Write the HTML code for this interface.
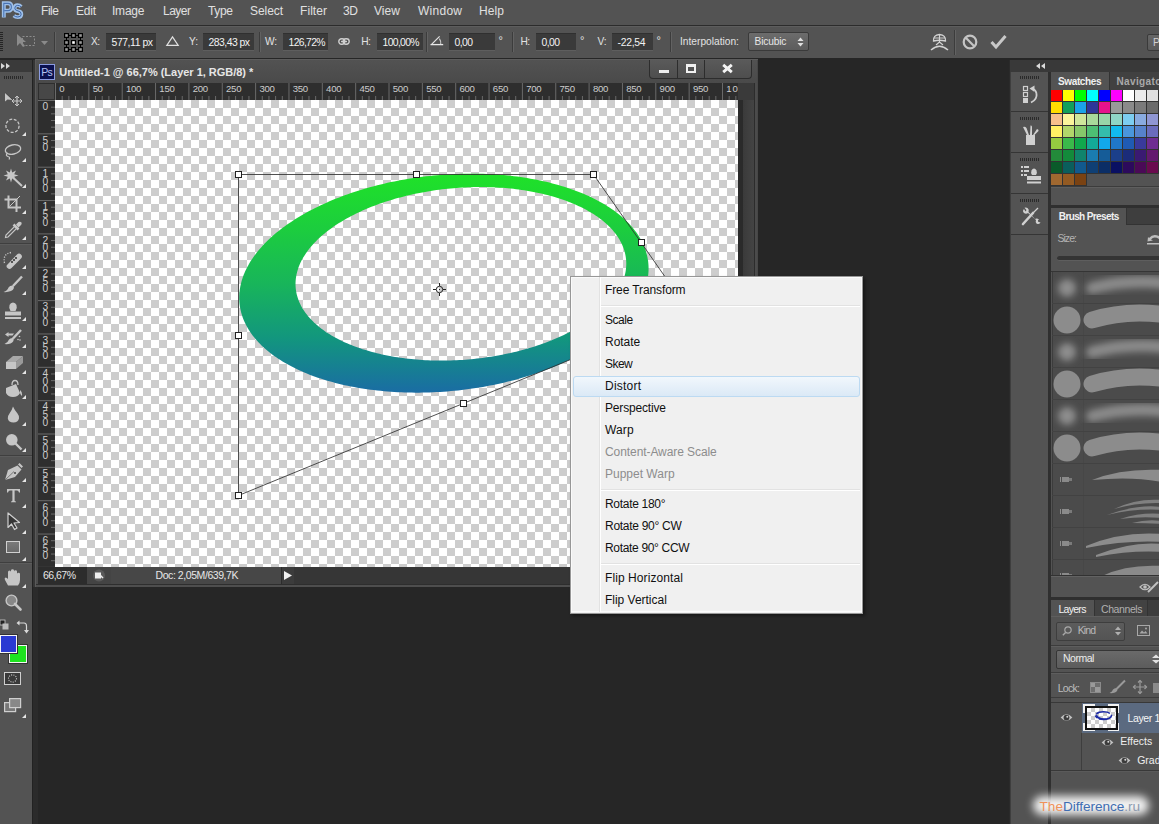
<!DOCTYPE html>
<html><head><meta charset="utf-8">
<style>
*{margin:0;padding:0;box-sizing:border-box}
html,body{width:1159px;height:824px;overflow:hidden;background:#262626;font-family:"Liberation Sans",sans-serif;position:relative}
.a{position:absolute}
svg.a{overflow:visible}
.t{position:absolute;white-space:nowrap}
.chk{background-color:#fff;background-image:linear-gradient(45deg,#cdcdcd 25%,transparent 25%,transparent 75%,#cdcdcd 75%),linear-gradient(45deg,#cdcdcd 25%,transparent 25%,transparent 75%,#cdcdcd 75%);background-size:16px 16px;background-position:0 0,8px 8px}
</style></head><body>
<div class="a" style="left:0px;top:0px;width:1159px;height:25px;background:#535353;"></div>
<div class="a" style="left:0px;top:25px;width:1159px;height:1px;background:#2c2c2c;"></div>
<svg class="a" style="left:0px;top:0px;" width="24" height="20" viewBox="0 0 24 20"><path d="M3.8 17.5 V3.2 H8 Q11.6 3.2 11.6 7 Q11.6 10.8 8 10.8 H4.5" fill="none" stroke="#9fc0e8" stroke-width="3.9"/><path d="M3.8 17 V3.4 H8 Q11.4 3.4 11.4 7 Q11.4 10.6 8 10.6 H4.5" fill="none" stroke="#4a74b4" stroke-width="1.1"/><path d="M21.2 6.8 Q19.8 5.2 17.6 5.2 Q14.6 5.2 14.6 8.2 Q14.6 10.6 18 11.1 Q21.4 11.6 21.4 14.2 Q21.4 17.2 17.8 17.2 Q15.4 17.2 13.8 15.6" fill="none" stroke="#9fc0e8" stroke-width="3.7"/><path d="M21 6.8 Q19.8 5.4 17.6 5.4 Q14.8 5.4 14.8 8.2 Q14.8 10.4 18 10.9 Q21.2 11.4 21.2 14.2 Q21.2 17 17.8 17 Q15.5 17 14 15.6" fill="none" stroke="#3c66a8" stroke-width="1"/></svg>
<div class="t" style="left:41.00px;top:4.96px;font-size:12.00px;line-height:12.00px;color:#e0e0e0;letter-spacing:-0.446px;">File</div>
<div class="t" style="left:76.00px;top:4.96px;font-size:12.00px;line-height:12.00px;color:#e0e0e0;letter-spacing:-0.226px;">Edit</div>
<div class="t" style="left:112.00px;top:4.96px;font-size:12.00px;line-height:12.00px;color:#e0e0e0;letter-spacing:-0.213px;">Image</div>
<div class="t" style="left:163.00px;top:4.96px;font-size:12.00px;line-height:12.00px;color:#e0e0e0;letter-spacing:-0.505px;">Layer</div>
<div class="t" style="left:208.00px;top:4.96px;font-size:12.00px;line-height:12.00px;color:#e0e0e0;letter-spacing:-0.339px;">Type</div>
<div class="t" style="left:250.00px;top:4.96px;font-size:12.00px;line-height:12.00px;color:#e0e0e0;letter-spacing:-0.070px;">Select</div>
<div class="t" style="left:300.00px;top:4.96px;font-size:12.00px;line-height:12.00px;color:#e0e0e0;letter-spacing:0.067px;">Filter</div>
<div class="t" style="left:343.00px;top:4.96px;font-size:12.00px;line-height:12.00px;color:#e0e0e0;letter-spacing:-0.340px;">3D</div>
<div class="t" style="left:374.00px;top:4.96px;font-size:12.00px;line-height:12.00px;color:#e0e0e0;letter-spacing:0.069px;">View</div>
<div class="t" style="left:418.00px;top:4.96px;font-size:12.00px;line-height:12.00px;color:#e0e0e0;letter-spacing:0.264px;">Window</div>
<div class="t" style="left:479.00px;top:4.96px;font-size:12.00px;line-height:12.00px;color:#e0e0e0;letter-spacing:0.106px;">Help</div>
<div class="a" style="left:0px;top:26px;width:1159px;height:32px;background:#535353;border-top:1px solid #5d5d5d"></div>
<svg class="a" style="left:0px;top:32px;" width="8" height="20" viewBox="0 0 8 20"><rect x="0" y="0" width="3" height="1" fill="#252525"/><rect x="0" y="2" width="3" height="1" fill="#252525"/><rect x="0" y="4" width="3" height="1" fill="#252525"/><rect x="0" y="6" width="3" height="1" fill="#252525"/><rect x="0" y="8" width="3" height="1" fill="#252525"/><rect x="0" y="10" width="3" height="1" fill="#252525"/><rect x="0" y="12" width="3" height="1" fill="#252525"/><rect x="0" y="14" width="3" height="1" fill="#252525"/><rect x="0" y="16" width="3" height="1" fill="#252525"/><rect x="0" y="18" width="3" height="1" fill="#252525"/></svg>
<svg class="a" style="left:16px;top:34px;" width="20" height="14" viewBox="0 0 20 14"><path d="M1 0 L1 12 L4 9 L7 13 L9 12 L6 8 L10 8 Z" fill="#8c8c8c"/><rect x="6.5" y="2.5" width="12" height="9" fill="none" stroke="#8c8c8c" stroke-dasharray="2 1.5"/></svg>
<svg class="a" style="left:41px;top:41px;" width="7" height="4" viewBox="0 0 7 4"><path d="M0 0 L7 0 L3.5 4 Z" fill="#8a8a8a"/></svg>
<div class="a" style="left:54px;top:32px;width:1px;height:20px;background:#3c3c3c;"></div>
<div class="a" style="left:55px;top:32px;width:1px;height:20px;background:#626262;"></div>
<svg class="a" style="left:64px;top:33px;" width="19" height="19" viewBox="0 0 19 19"><rect x="0.6" y="0.6" width="3.8" height="3.8" fill="#9a9a9a" stroke="#000" stroke-width="1.2"/><rect x="0.6" y="7.6" width="3.8" height="3.8" fill="#9a9a9a" stroke="#000" stroke-width="1.2"/><rect x="0.6" y="14.6" width="3.8" height="3.8" fill="#9a9a9a" stroke="#000" stroke-width="1.2"/><rect x="7.6" y="0.6" width="3.8" height="3.8" fill="#9a9a9a" stroke="#000" stroke-width="1.2"/><rect x="7.6" y="7.6" width="3.8" height="3.8" fill="#ffffff" stroke="#000" stroke-width="1.2"/><rect x="7.6" y="14.6" width="3.8" height="3.8" fill="#9a9a9a" stroke="#000" stroke-width="1.2"/><rect x="14.6" y="0.6" width="3.8" height="3.8" fill="#9a9a9a" stroke="#000" stroke-width="1.2"/><rect x="14.6" y="7.6" width="3.8" height="3.8" fill="#9a9a9a" stroke="#000" stroke-width="1.2"/><rect x="14.6" y="14.6" width="3.8" height="3.8" fill="#9a9a9a" stroke="#000" stroke-width="1.2"/><path d="M5 2.5 H7 M12 2.5 H14 M5 16.5 H7 M12 16.5 H14 M2.5 5 V7 M2.5 12 V14 M16.5 5 V7 M16.5 12 V14" stroke="#000" stroke-width="1"/></svg>
<div class="t" style="left:91.00px;top:37.33px;font-size:10.20px;line-height:10.20px;color:#e2e2e2;letter-spacing:-0.637px;">X:</div>
<div class="a" style="left:106px;top:32.5px;width:49.5px;height:18.5px;background:#3a3a3a;border-top:1px solid #303030;border-bottom:1px solid #5e5e5e"></div>
<div class="t" style="left:111.60px;top:37.53px;font-size:10.40px;line-height:10.40px;color:#f2f2f2;letter-spacing:-0.439px;">577,11 px</div>
<svg class="a" style="left:166px;top:36px;" width="13" height="10" viewBox="0 0 13 10"><path d="M6.5 0.8 L12.2 9.4 L0.8 9.4 Z" fill="none" stroke="#e0e0e0" stroke-width="1.2"/></svg>
<div class="t" style="left:189.00px;top:37.33px;font-size:10.20px;line-height:10.20px;color:#e2e2e2;letter-spacing:-0.075px;">Y:</div>
<div class="a" style="left:203px;top:32.5px;width:50.5px;height:18.5px;background:#3a3a3a;border-top:1px solid #303030;border-bottom:1px solid #5e5e5e"></div>
<div class="t" style="left:208.60px;top:37.53px;font-size:10.40px;line-height:10.40px;color:#f2f2f2;letter-spacing:-0.535px;">283,43 px</div>
<div class="a" style="left:259px;top:32px;width:1px;height:20px;background:#3c3c3c;"></div>
<div class="a" style="left:260px;top:32px;width:1px;height:20px;background:#626262;"></div>
<div class="t" style="left:265.00px;top:37.33px;font-size:10.20px;line-height:10.20px;color:#e2e2e2;letter-spacing:-0.277px;">W:</div>
<div class="a" style="left:283px;top:32.5px;width:45px;height:18.5px;background:#3a3a3a;border-top:1px solid #303030;border-bottom:1px solid #5e5e5e"></div>
<div class="t" style="left:288.60px;top:37.53px;font-size:10.40px;line-height:10.40px;color:#f2f2f2;letter-spacing:-0.676px;">126,72%</div>
<svg class="a" style="left:338px;top:38px;" width="12" height="7" viewBox="0 0 12 7"><rect x="0.8" y="0.8" width="6" height="5.4" rx="2.7" fill="none" stroke="#cfcfcf" stroke-width="1.4"/><rect x="5.2" y="0.8" width="6" height="5.4" rx="2.7" fill="none" stroke="#cfcfcf" stroke-width="1.4"/><path d="M3 3.5 H9" stroke="#cfcfcf" stroke-width="1.4"/></svg>
<div class="t" style="left:361.30px;top:37.33px;font-size:10.20px;line-height:10.20px;color:#e2e2e2;letter-spacing:-0.600px;">H:</div>
<div class="a" style="left:377px;top:32.5px;width:45.5px;height:18.5px;background:#3a3a3a;border-top:1px solid #303030;border-bottom:1px solid #5e5e5e"></div>
<div class="t" style="left:382.60px;top:37.53px;font-size:10.40px;line-height:10.40px;color:#f2f2f2;letter-spacing:-0.676px;">100,00%</div>
<div class="a" style="left:426px;top:32px;width:1px;height:20px;background:#3c3c3c;"></div>
<div class="a" style="left:427px;top:32px;width:1px;height:20px;background:#626262;"></div>
<svg class="a" style="left:430px;top:35px;" width="14" height="11" viewBox="0 0 14 11"><path d="M0.5 9.6 H13.2" stroke="#e8e8e8" stroke-width="1.3"/><path d="M1.8 9.2 L9.6 1.4" stroke="#e4e4e4" stroke-width="1.2"/><path d="M9.4 3.6 Q11.2 6.2 10.7 9.2" fill="none" stroke="#cfcfcf" stroke-width="1.1"/></svg>
<div class="a" style="left:449px;top:32.5px;width:45.5px;height:18.5px;background:#3a3a3a;border-top:1px solid #303030;border-bottom:1px solid #5e5e5e"></div>
<div class="t" style="left:454.60px;top:37.53px;font-size:10.40px;line-height:10.40px;color:#f2f2f2;letter-spacing:-0.581px;">0,00</div>
<div class="t" style="left:498.50px;top:35.23px;font-size:11.00px;line-height:11.00px;color:#e2e2e2;">°</div>
<div class="a" style="left:512px;top:32px;width:1px;height:20px;background:#3c3c3c;"></div>
<div class="a" style="left:513px;top:32px;width:1px;height:20px;background:#626262;"></div>
<div class="t" style="left:520.50px;top:37.33px;font-size:10.20px;line-height:10.20px;color:#e2e2e2;letter-spacing:-0.600px;">H:</div>
<div class="a" style="left:536px;top:32.5px;width:40px;height:18.5px;background:#3a3a3a;border-top:1px solid #303030;border-bottom:1px solid #5e5e5e"></div>
<div class="t" style="left:541.60px;top:37.53px;font-size:10.40px;line-height:10.40px;color:#f2f2f2;letter-spacing:-0.581px;">0,00</div>
<div class="t" style="left:580.00px;top:35.23px;font-size:11.00px;line-height:11.00px;color:#e2e2e2;">°</div>
<div class="t" style="left:597.50px;top:37.33px;font-size:10.20px;line-height:10.20px;color:#e2e2e2;letter-spacing:-0.259px;">V:</div>
<div class="a" style="left:612px;top:32.5px;width:40.5px;height:18.5px;background:#3a3a3a;border-top:1px solid #303030;border-bottom:1px solid #5e5e5e"></div>
<div class="t" style="left:617.60px;top:37.53px;font-size:10.40px;line-height:10.40px;color:#f2f2f2;letter-spacing:-0.298px;">-22,54</div>
<div class="t" style="left:656.50px;top:35.23px;font-size:11.00px;line-height:11.00px;color:#e2e2e2;">°</div>
<div class="a" style="left:670px;top:32px;width:1px;height:20px;background:#3c3c3c;"></div>
<div class="a" style="left:671px;top:32px;width:1px;height:20px;background:#626262;"></div>
<div class="t" style="left:680.00px;top:37.33px;font-size:10.20px;line-height:10.20px;color:#e2e2e2;letter-spacing:0.002px;">Interpolation:</div>
<div class="a" style="left:747.5px;top:31.5px;width:61px;height:19px;background:linear-gradient(#6c6c6c,#5c5c5c);border:1px solid #3a3a3a;border-radius:2px"></div>
<div class="t" style="left:754.50px;top:37.33px;font-size:10.20px;line-height:10.20px;color:#e6e6e6;letter-spacing:-0.147px;">Bicubic</div>
<svg class="a" style="left:797px;top:37px;" width="7" height="10" viewBox="0 0 7 10"><path d="M0.5 4 L3.5 0.5 L6.5 4 Z M0.5 6 L3.5 9.5 L6.5 6 Z" fill="#e0e0e0"/></svg>
<svg class="a" style="left:930px;top:33px;" width="19" height="18" viewBox="0 0 19 18"><path d="M3.5 8 Q3 2 9.5 1.5 Q16 2 15.5 8 Q9.5 6.5 3.5 8 Z" fill="none" stroke="#d2d2d2" stroke-width="1.3"/><path d="M9.5 1.5 V9 M4 5 H15" stroke="#d2d2d2" stroke-width="1.1"/><path d="M9.5 9 L6 12 M9.5 9 L13 12" stroke="#d2d2d2" stroke-width="1.1"/><path d="M1 17 Q9.5 9.5 18 17" fill="none" stroke="#d2d2d2" stroke-width="1.6"/></svg>
<div class="a" style="left:954px;top:30px;width:1px;height:25px;background:#3c3c3c;"></div>
<div class="a" style="left:955px;top:30px;width:1px;height:25px;background:#626262;"></div>
<svg class="a" style="left:962px;top:34px;" width="16" height="16" viewBox="0 0 16 16"><circle cx="8" cy="8" r="6.3" fill="none" stroke="#c4c4c4" stroke-width="2.2"/><path d="M3.8 3.8 L12.2 12.2" stroke="#c4c4c4" stroke-width="2.2"/></svg>
<svg class="a" style="left:990px;top:34px;" width="17" height="15" viewBox="0 0 17 15"><path d="M1.5 8 L6 13 L15.5 2" fill="none" stroke="#c8c8c8" stroke-width="3"/></svg>
<div class="a" style="left:1147px;top:34px;width:14px;height:17px;background:linear-gradient(#666,#5a5a5a);border:1px solid #3a3a3a;border-radius:2px"></div>
<div class="t" style="left:1153.00px;top:38.43px;font-size:10.20px;line-height:10.20px;color:#d0d0d0;">P</div>
<div class="a" style="left:0px;top:60px;width:32px;height:764px;background:#535353;"></div>
<div class="a" style="left:0px;top:60px;width:32px;height:12px;background:#3a3a3a;"></div>
<div class="a" style="left:32px;top:60px;width:1px;height:764px;background:#222222;"></div>
<div class="a" style="left:33px;top:60px;width:2px;height:527px;background:#363636;"></div>
<div class="a" style="left:33px;top:587px;width:5px;height:237px;background:#2b2b2b;"></div>
<svg class="a" style="left:1px;top:63px;" width="10" height="6" viewBox="0 0 10 6"><path d="M0 0 L4 3 L0 6 Z M5 0 L9 3 L5 6 Z" fill="#d8d8d8"/></svg>
<svg class="a" style="left:4px;top:76px;" width="20" height="3" viewBox="0 0 20 3"><rect x="0" y="0" width="1" height="3" fill="#2a2a2a"/><rect x="2" y="0" width="1" height="3" fill="#2a2a2a"/><rect x="4" y="0" width="1" height="3" fill="#2a2a2a"/><rect x="6" y="0" width="1" height="3" fill="#2a2a2a"/><rect x="8" y="0" width="1" height="3" fill="#2a2a2a"/><rect x="10" y="0" width="1" height="3" fill="#2a2a2a"/><rect x="12" y="0" width="1" height="3" fill="#2a2a2a"/><rect x="14" y="0" width="1" height="3" fill="#2a2a2a"/><rect x="16" y="0" width="1" height="3" fill="#2a2a2a"/><rect x="18" y="0" width="1" height="3" fill="#2a2a2a"/></svg>
<svg class="a" style="left:4px;top:92px;" width="20" height="16" viewBox="0 0 20 16"><path d="M1 0.5 L1 9.5 L3.5 7.5 L9 8 Z" fill="#c6c6c6"/><path d="M1 0.5 L9 8" stroke="#333" stroke-width="0.8"/><path d="M13 4 V14 M8 9 H18" stroke="#c6c6c6" stroke-width="1.2"/><path d="M11 6 L13 4 L15 6 M11 12 L13 14 L15 12 M10 7 L8 9 L10 11 M16 7 L18 9 L16 11" fill="none" stroke="#c6c6c6" stroke-width="1"/></svg>
<svg class="a" style="left:4px;top:118px;" width="18" height="16" viewBox="0 0 18 16"><circle cx="8.5" cy="7.8" r="6.6" fill="none" stroke="#c6c6c6" stroke-width="1.3" stroke-dasharray="3 1.6"/></svg>
<svg class="a" style="left:22px;top:132px;" width="4" height="4" viewBox="0 0 4 4"><path d="M4 0 L4 4 L0 4 Z" fill="#e6e6e6"/></svg>
<svg class="a" style="left:4px;top:143px;" width="19" height="17" viewBox="0 0 19 17"><ellipse cx="9" cy="6.5" rx="7.8" ry="4.6" fill="none" stroke="#c6c6c6" stroke-width="1.3" transform="rotate(-12 9 6.5)"/><path d="M3.5 10 Q1 12.5 4 13.5 Q6.5 14 5 16.5" fill="none" stroke="#c6c6c6" stroke-width="1.2"/></svg>
<svg class="a" style="left:22px;top:158px;" width="4" height="4" viewBox="0 0 4 4"><path d="M4 0 L4 4 L0 4 Z" fill="#e6e6e6"/></svg>
<svg class="a" style="left:3px;top:168px;" width="22" height="20" viewBox="0 0 22 20"><path d="M8 0.5 L9.2 4.5 L13 2.5 L11.2 6.3 L15.5 7.5 L11.2 8.8 L13 12.5 L9.2 10.5 L8 14.5 L6.8 10.5 L3 12.5 L4.8 8.8 L0.5 7.5 L4.8 6.3 L3 2.5 L6.8 4.5 Z" fill="#c6c6c6"/><path d="M10.5 10 L19 18" stroke="#c6c6c6" stroke-width="2"/></svg>
<svg class="a" style="left:22px;top:184px;" width="4" height="4" viewBox="0 0 4 4"><path d="M4 0 L4 4 L0 4 Z" fill="#e6e6e6"/></svg>
<svg class="a" style="left:4px;top:195px;" width="18" height="18" viewBox="0 0 18 18"><path d="M4.5 0.5 V12.5 H17 M0.5 4.5 H12.5 V17" fill="none" stroke="#c6c6c6" stroke-width="2"/><path d="M5.5 11.5 L16 1" stroke="#c6c6c6" stroke-width="1"/></svg>
<svg class="a" style="left:22px;top:210px;" width="4" height="4" viewBox="0 0 4 4"><path d="M4 0 L4 4 L0 4 Z" fill="#e6e6e6"/></svg>
<svg class="a" style="left:4px;top:221px;" width="19" height="18" viewBox="0 0 19 18"><path d="M1.5 16.5 L2 14 L11 5 L13 7 L4 16 Z" fill="none" stroke="#c6c6c6" stroke-width="1.2"/><path d="M9.5 3.5 L14.5 8.5" stroke="#c6c6c6" stroke-width="2.5"/><path d="M12 3.5 L14.5 1 Q16.5 0.5 17.5 1.5 Q18 3 17 4 L14.5 6.5 Z" fill="#c6c6c6"/></svg>
<svg class="a" style="left:22px;top:236px;" width="4" height="4" viewBox="0 0 4 4"><path d="M4 0 L4 4 L0 4 Z" fill="#e6e6e6"/></svg>
<div class="a" style="left:0px;top:243px;width:32px;height:1px;background:#3f3f3f;"></div>
<div class="a" style="left:0px;top:244px;width:32px;height:1px;background:#5c5c5c;"></div>
<svg class="a" style="left:2px;top:251px;" width="22" height="18" viewBox="0 0 22 18"><path d="M2.5 12 Q0.5 3 9 1.5" fill="none" stroke="#c6c6c6" stroke-width="1.3" stroke-dasharray="1.2 1.4"/><path d="M5.5 13.5 L15 3.5 Q17 1.5 19 3.5 Q21 5.5 19 7.5 L9.5 17 Q7.5 19 5.5 17 Q3.5 15 5.5 13.5 Z" fill="#c6c6c6"/><rect x="11" y="8" width="2" height="2" fill="#555"/><rect x="9" y="10" width="2" height="2" fill="#555"/><rect x="13" y="6" width="2" height="2" fill="#555"/></svg>
<svg class="a" style="left:22px;top:265px;" width="4" height="4" viewBox="0 0 4 4"><path d="M4 0 L4 4 L0 4 Z" fill="#e6e6e6"/></svg>
<svg class="a" style="left:3px;top:276px;" width="20" height="17" viewBox="0 0 20 17"><path d="M19 0.5 L10 10" stroke="#c6c6c6" stroke-width="2.4"/><path d="M10.5 9.5 Q12 13 8 15 Q4 16.5 0.5 16 Q4.5 14.5 5.5 11.5 Q7 9 10.5 9.5 Z" fill="#c6c6c6"/></svg>
<svg class="a" style="left:22px;top:291px;" width="4" height="4" viewBox="0 0 4 4"><path d="M4 0 L4 4 L0 4 Z" fill="#e6e6e6"/></svg>
<svg class="a" style="left:4px;top:302px;" width="18" height="18" viewBox="0 0 18 18"><path d="M6.5 9 Q4.5 6 5.5 3 Q6.5 0.5 9 0.5 Q11.5 0.5 12.5 3 Q13.5 6 11.5 9 Z" fill="#c6c6c6"/><rect x="1" y="9.5" width="16" height="4" fill="#c6c6c6"/><rect x="1" y="15" width="16" height="2" fill="#c6c6c6"/></svg>
<svg class="a" style="left:22px;top:317px;" width="4" height="4" viewBox="0 0 4 4"><path d="M4 0 L4 4 L0 4 Z" fill="#e6e6e6"/></svg>
<svg class="a" style="left:4px;top:329px;" width="18" height="17" viewBox="0 0 18 17"><path d="M17 1 L9 9.5" stroke="#c6c6c6" stroke-width="2.4"/><path d="M9.5 9 Q10.5 12.5 6.5 14.5 Q3.5 15.5 0.5 15 Q4 13.5 5 10.5 Q6.5 8.5 9.5 9 Z" fill="#c6c6c6"/><path d="M1 5.5 L4.5 3 L4.5 4.5 H10 L8.5 6.5 H4.5 V8 Z" fill="#c6c6c6"/><circle cx="15.5" cy="7.5" r="0.8" fill="#c6c6c6"/><circle cx="14" cy="10.5" r="0.8" fill="#c6c6c6"/><circle cx="16" cy="11" r="0.8" fill="#c6c6c6"/></svg>
<svg class="a" style="left:22px;top:344px;" width="4" height="4" viewBox="0 0 4 4"><path d="M4 0 L4 4 L0 4 Z" fill="#e6e6e6"/></svg>
<svg class="a" style="left:5px;top:355px;" width="19" height="15" viewBox="0 0 19 15"><path d="M1 7 L8 1 H18 L11 7 Z" fill="#a8a8a8"/><path d="M1 7 H11 V14 H1 Z" fill="#c6c6c6"/><path d="M11 7 L18 1 V8 L11 14 Z" fill="#999"/></svg>
<svg class="a" style="left:22px;top:370px;" width="4" height="4" viewBox="0 0 4 4"><path d="M4 0 L4 4 L0 4 Z" fill="#e6e6e6"/></svg>
<svg class="a" style="left:4px;top:380px;" width="19" height="18" viewBox="0 0 19 18"><path d="M8 5 Q8 0.5 11 0.5 Q14 0.5 14 5" fill="none" stroke="#c6c6c6" stroke-width="1.3"/><path d="M2 8 L12 4 L16 13 Q14 17 9 17 Q4 17 2 13 Z" fill="#c6c6c6"/><path d="M16 10 Q18.5 12 18 16 Q16.5 15 16 13 Z" fill="#c6c6c6"/></svg>
<svg class="a" style="left:22px;top:395px;" width="4" height="4" viewBox="0 0 4 4"><path d="M4 0 L4 4 L0 4 Z" fill="#e6e6e6"/></svg>
<svg class="a" style="left:7px;top:406px;" width="13" height="17" viewBox="0 0 13 17"><path d="M6 0.5 Q7.5 4 10.5 7.5 Q12.5 10 12 12.5 Q11 16.5 6.5 16.5 Q1.5 16.5 0.8 12.5 Q0.5 10 2.5 7.5 Q5 4 6 0.5 Z" fill="#c6c6c6"/></svg>
<svg class="a" style="left:22px;top:422px;" width="4" height="4" viewBox="0 0 4 4"><path d="M4 0 L4 4 L0 4 Z" fill="#e6e6e6"/></svg>
<svg class="a" style="left:5px;top:433px;" width="18" height="19" viewBox="0 0 18 19"><circle cx="6.8" cy="6.8" r="5.8" fill="#c6c6c6"/><path d="M10 10 L16.5 16.5" stroke="#c6c6c6" stroke-width="2.4"/></svg>
<svg class="a" style="left:22px;top:448px;" width="4" height="4" viewBox="0 0 4 4"><path d="M4 0 L4 4 L0 4 Z" fill="#e6e6e6"/></svg>
<div class="a" style="left:0px;top:455px;width:32px;height:1px;background:#3f3f3f;"></div>
<div class="a" style="left:0px;top:456px;width:32px;height:1px;background:#5c5c5c;"></div>
<svg class="a" style="left:4px;top:462px;" width="20" height="19" viewBox="0 0 20 19"><path d="M15.5 1 L19 4.5 L17.5 6 L14 2.5 Z" fill="#c6c6c6"/><path d="M13.5 3.5 L17.5 7.5 L11 15 L1 18 L4 8 Z" fill="#c6c6c6"/><circle cx="11" cy="11" r="1" fill="#444"/><path d="M1 18 L10 9.5" stroke="#555" stroke-width="0.7"/></svg>
<svg class="a" style="left:22px;top:478px;" width="4" height="4" viewBox="0 0 4 4"><path d="M4 0 L4 4 L0 4 Z" fill="#e6e6e6"/></svg>
<svg class="a" style="left:6px;top:488px;" width="15" height="15" viewBox="0 0 15 15"><path d="M1 1 H14 V4.5 H13 Q12.5 2.5 11 2.5 H8.6 V12.5 Q8.6 13.5 10 13.5 V14.2 H5 V13.5 Q6.4 13.5 6.4 12.5 V2.5 H4 Q2.5 2.5 2 4.5 H1 Z" fill="#c6c6c6"/></svg>
<svg class="a" style="left:22px;top:504px;" width="4" height="4" viewBox="0 0 4 4"><path d="M4 0 L4 4 L0 4 Z" fill="#e6e6e6"/></svg>
<svg class="a" style="left:7px;top:512px;" width="14" height="19" viewBox="0 0 14 19"><path d="M1 1 L1 15.5 L4.5 12 L7.5 17.5 L10 16 L7 11 L12.5 10.5 Z" fill="#363636" stroke="#d0d0d0" stroke-width="1.2" stroke-linejoin="round"/></svg>
<svg class="a" style="left:22px;top:530px;" width="4" height="4" viewBox="0 0 4 4"><path d="M4 0 L4 4 L0 4 Z" fill="#e6e6e6"/></svg>
<div class="a" style="left:6px;top:541px;width:14px;height:12px;background:linear-gradient(#7a7a7a,#6a6a6a);border:1.5px solid #d0d0d0"></div>
<svg class="a" style="left:22px;top:557px;" width="4" height="4" viewBox="0 0 4 4"><path d="M4 0 L4 4 L0 4 Z" fill="#e6e6e6"/></svg>
<div class="a" style="left:0px;top:562px;width:32px;height:1px;background:#3f3f3f;"></div>
<div class="a" style="left:0px;top:563px;width:32px;height:1px;background:#5c5c5c;"></div>
<svg class="a" style="left:4px;top:569px;" width="18" height="17" viewBox="0 0 18 17"><path d="M4 16.5 L1 11 Q0 9 1.5 8.5 Q3 8.5 4 10 V3 Q4 1.5 5.5 1.5 Q7 1.5 7 3 V1.5 Q7 0.3 8.5 0.3 Q10 0.3 10 1.5 V2.5 Q10 1.3 11.5 1.3 Q13 1.3 13 2.5 V5 Q13 3.8 14.5 3.8 Q16 3.8 16 5 V11 Q16 14 14 16.5 Z" fill="#c6c6c6"/></svg>
<svg class="a" style="left:22px;top:584px;" width="4" height="4" viewBox="0 0 4 4"><path d="M4 0 L4 4 L0 4 Z" fill="#e6e6e6"/></svg>
<svg class="a" style="left:5px;top:594px;" width="17" height="17" viewBox="0 0 17 17"><circle cx="6.5" cy="6.5" r="5.4" fill="#888" stroke="#c6c6c6" stroke-width="1.4"/><path d="M10 10 L15.5 15.5" stroke="#c6c6c6" stroke-width="2.6" stroke-linecap="round"/></svg>
<svg class="a" style="left:0px;top:620px;" width="9" height="10" viewBox="0 0 9 10"><rect x="0" y="0" width="5" height="5" fill="#222" stroke="#ccc" stroke-width="0.8"/><rect x="2.5" y="3.5" width="6" height="6" fill="#bbb"/></svg>
<svg class="a" style="left:16px;top:620px;" width="12" height="14" viewBox="0 0 12 14"><path d="M2 3 H8 Q10.5 3 10.5 6 V11" fill="none" stroke="#d8d8d8" stroke-width="1.2"/><path d="M0.5 3 L3.5 0.5 V5.5 Z M10.5 13.5 L8 10 H13 Z" fill="#d8d8d8"/></svg>
<div class="a" style="left:9px;top:645px;width:18px;height:18px;background:#1ee31f;border:1px solid #f4f4f4;box-shadow:0 0 0 1px #333"></div>
<div class="a" style="left:0px;top:635px;width:17px;height:18px;background:#2a3ad2;border:1px solid #f4f4f4;box-shadow:0 0 0 1px #333"></div>
<div class="a" style="left:4px;top:672px;width:17px;height:13px;background:#3a3a3a;border:1.2px solid #cfcfcf"></div>
<svg class="a" style="left:7px;top:674px;" width="11" height="9" viewBox="0 0 11 9"><ellipse cx="5.5" cy="4.5" rx="4" ry="3.6" fill="none" stroke="#d0d0d0" stroke-width="1.1" stroke-dasharray="1 1.3"/></svg>
<svg class="a" style="left:4px;top:698px;" width="19" height="15" viewBox="0 0 19 15"><rect x="0.6" y="4.6" width="11" height="9" fill="#777" stroke="#cfcfcf" stroke-width="1.2"/><rect x="5.6" y="0.6" width="11" height="9" fill="#888" stroke="#cfcfcf" stroke-width="1.2"/></svg>
<svg class="a" style="left:22px;top:714px;" width="4" height="4" viewBox="0 0 4 4"><path d="M4 0 L4 4 L0 4 Z" fill="#e6e6e6"/></svg>
<div class="a" style="left:35px;top:59px;width:723px;height:528px;background:#4b4b4b;"></div>
<div class="a" style="left:35px;top:59px;width:723px;height:1px;background:#5c5c5c;"></div>
<div class="a" style="left:35px;top:59px;width:1px;height:528px;background:#5a5a5a;"></div>
<div class="a" style="left:757px;top:60px;width:1px;height:527px;background:#474747;"></div>
<div class="a" style="left:754px;top:83px;width:1px;height:484px;background:#2c2c2c;"></div>
<div class="a" style="left:36px;top:60px;width:721px;height:23px;background:linear-gradient(#525252,#4a4a4a);"></div>
<div class="a" style="left:39px;top:64px;width:16px;height:16px;background:#0b1150;border:1px solid #8b9be0"></div>
<div class="t" style="left:41.20px;top:67.03px;font-size:10.50px;line-height:10.50px;color:#b4c2f4;letter-spacing:-0.754px;">Ps</div>
<div class="t" style="left:59.30px;top:66.65px;font-size:11.00px;line-height:11.00px;color:#e6e6e6;font-weight:bold;letter-spacing:-0.020px;">Untitled-1 @ 66,7% (Layer 1, RGB/8) *</div>
<div class="a" style="left:649px;top:60px;width:103px;height:19px;background:linear-gradient(#5a5a5a,#4e4e4e);border:1px solid #2d2d2d;border-top:none;border-radius:0 0 4px 4px"></div>
<div class="a" style="left:677px;top:60px;width:1px;height:18px;background:#2d2d2d;"></div>
<div class="a" style="left:704px;top:60px;width:1px;height:18px;background:#2d2d2d;"></div>
<div class="a" style="left:659px;top:70px;width:10px;height:3px;background:#eeeeee;"></div>
<div class="a" style="left:686px;top:64px;width:10px;height:9px;background:transparent;border:2px solid #f0f0f0;border-top-width:3px"></div>
<svg class="a" style="left:722px;top:64px;" width="11" height="9" viewBox="0 0 11 9"><path d="M1.2 0.8 L9.8 8.2 M9.8 0.8 L1.2 8.2" stroke="#f4f4f4" stroke-width="2.9" stroke-linecap="butt"/></svg>
<div class="a" style="left:38px;top:83px;width:17px;height:17px;background:#474747;border:1px solid #2e2e2e"></div>
<div class="a" style="left:55px;top:83px;width:699px;height:17px;background:#2e2e2e;"></div>
<div class="a" style="left:738px;top:83px;width:16px;height:17px;background:#3a3a3a;"></div>
<div class="a" style="left:38px;top:100px;width:17px;height:467px;background:#2e2e2e;"></div>
<svg class="a" style="left:55px;top:83px;overflow:hidden" width="683" height="17" viewBox="0 0 683 17"><rect x="0.00" y="0" width="1" height="17" fill="#6a6a6a"/><rect x="6.67" y="13" width="1" height="4" fill="#6a6a6a"/><rect x="13.34" y="13" width="1" height="4" fill="#6a6a6a"/><rect x="20.01" y="13" width="1" height="4" fill="#6a6a6a"/><rect x="26.68" y="13" width="1" height="4" fill="#6a6a6a"/><rect x="33.35" y="0" width="1" height="17" fill="#6a6a6a"/><rect x="40.02" y="13" width="1" height="4" fill="#6a6a6a"/><rect x="46.69" y="13" width="1" height="4" fill="#6a6a6a"/><rect x="53.36" y="13" width="1" height="4" fill="#6a6a6a"/><rect x="60.03" y="13" width="1" height="4" fill="#6a6a6a"/><rect x="66.70" y="0" width="1" height="17" fill="#6a6a6a"/><rect x="73.37" y="13" width="1" height="4" fill="#6a6a6a"/><rect x="80.04" y="13" width="1" height="4" fill="#6a6a6a"/><rect x="86.71" y="13" width="1" height="4" fill="#6a6a6a"/><rect x="93.38" y="13" width="1" height="4" fill="#6a6a6a"/><rect x="100.05" y="0" width="1" height="17" fill="#6a6a6a"/><rect x="106.72" y="13" width="1" height="4" fill="#6a6a6a"/><rect x="113.39" y="13" width="1" height="4" fill="#6a6a6a"/><rect x="120.06" y="13" width="1" height="4" fill="#6a6a6a"/><rect x="126.73" y="13" width="1" height="4" fill="#6a6a6a"/><rect x="133.40" y="0" width="1" height="17" fill="#6a6a6a"/><rect x="140.07" y="13" width="1" height="4" fill="#6a6a6a"/><rect x="146.74" y="13" width="1" height="4" fill="#6a6a6a"/><rect x="153.41" y="13" width="1" height="4" fill="#6a6a6a"/><rect x="160.08" y="13" width="1" height="4" fill="#6a6a6a"/><rect x="166.75" y="0" width="1" height="17" fill="#6a6a6a"/><rect x="173.42" y="13" width="1" height="4" fill="#6a6a6a"/><rect x="180.09" y="13" width="1" height="4" fill="#6a6a6a"/><rect x="186.76" y="13" width="1" height="4" fill="#6a6a6a"/><rect x="193.43" y="13" width="1" height="4" fill="#6a6a6a"/><rect x="200.10" y="0" width="1" height="17" fill="#6a6a6a"/><rect x="206.77" y="13" width="1" height="4" fill="#6a6a6a"/><rect x="213.44" y="13" width="1" height="4" fill="#6a6a6a"/><rect x="220.11" y="13" width="1" height="4" fill="#6a6a6a"/><rect x="226.78" y="13" width="1" height="4" fill="#6a6a6a"/><rect x="233.45" y="0" width="1" height="17" fill="#6a6a6a"/><rect x="240.12" y="13" width="1" height="4" fill="#6a6a6a"/><rect x="246.79" y="13" width="1" height="4" fill="#6a6a6a"/><rect x="253.46" y="13" width="1" height="4" fill="#6a6a6a"/><rect x="260.13" y="13" width="1" height="4" fill="#6a6a6a"/><rect x="266.80" y="0" width="1" height="17" fill="#6a6a6a"/><rect x="273.47" y="13" width="1" height="4" fill="#6a6a6a"/><rect x="280.14" y="13" width="1" height="4" fill="#6a6a6a"/><rect x="286.81" y="13" width="1" height="4" fill="#6a6a6a"/><rect x="293.48" y="13" width="1" height="4" fill="#6a6a6a"/><rect x="300.15" y="0" width="1" height="17" fill="#6a6a6a"/><rect x="306.82" y="13" width="1" height="4" fill="#6a6a6a"/><rect x="313.49" y="13" width="1" height="4" fill="#6a6a6a"/><rect x="320.16" y="13" width="1" height="4" fill="#6a6a6a"/><rect x="326.83" y="13" width="1" height="4" fill="#6a6a6a"/><rect x="333.50" y="0" width="1" height="17" fill="#6a6a6a"/><rect x="340.17" y="13" width="1" height="4" fill="#6a6a6a"/><rect x="346.84" y="13" width="1" height="4" fill="#6a6a6a"/><rect x="353.51" y="13" width="1" height="4" fill="#6a6a6a"/><rect x="360.18" y="13" width="1" height="4" fill="#6a6a6a"/><rect x="366.85" y="0" width="1" height="17" fill="#6a6a6a"/><rect x="373.52" y="13" width="1" height="4" fill="#6a6a6a"/><rect x="380.19" y="13" width="1" height="4" fill="#6a6a6a"/><rect x="386.86" y="13" width="1" height="4" fill="#6a6a6a"/><rect x="393.53" y="13" width="1" height="4" fill="#6a6a6a"/><rect x="400.20" y="0" width="1" height="17" fill="#6a6a6a"/><rect x="406.87" y="13" width="1" height="4" fill="#6a6a6a"/><rect x="413.54" y="13" width="1" height="4" fill="#6a6a6a"/><rect x="420.21" y="13" width="1" height="4" fill="#6a6a6a"/><rect x="426.88" y="13" width="1" height="4" fill="#6a6a6a"/><rect x="433.54" y="0" width="1" height="17" fill="#6a6a6a"/><rect x="440.21" y="13" width="1" height="4" fill="#6a6a6a"/><rect x="446.88" y="13" width="1" height="4" fill="#6a6a6a"/><rect x="453.55" y="13" width="1" height="4" fill="#6a6a6a"/><rect x="460.22" y="13" width="1" height="4" fill="#6a6a6a"/><rect x="466.89" y="0" width="1" height="17" fill="#6a6a6a"/><rect x="473.56" y="13" width="1" height="4" fill="#6a6a6a"/><rect x="480.23" y="13" width="1" height="4" fill="#6a6a6a"/><rect x="486.90" y="13" width="1" height="4" fill="#6a6a6a"/><rect x="493.57" y="13" width="1" height="4" fill="#6a6a6a"/><rect x="500.24" y="0" width="1" height="17" fill="#6a6a6a"/><rect x="506.91" y="13" width="1" height="4" fill="#6a6a6a"/><rect x="513.58" y="13" width="1" height="4" fill="#6a6a6a"/><rect x="520.25" y="13" width="1" height="4" fill="#6a6a6a"/><rect x="526.92" y="13" width="1" height="4" fill="#6a6a6a"/><rect x="533.59" y="0" width="1" height="17" fill="#6a6a6a"/><rect x="540.26" y="13" width="1" height="4" fill="#6a6a6a"/><rect x="546.93" y="13" width="1" height="4" fill="#6a6a6a"/><rect x="553.60" y="13" width="1" height="4" fill="#6a6a6a"/><rect x="560.27" y="13" width="1" height="4" fill="#6a6a6a"/><rect x="566.94" y="0" width="1" height="17" fill="#6a6a6a"/><rect x="573.61" y="13" width="1" height="4" fill="#6a6a6a"/><rect x="580.28" y="13" width="1" height="4" fill="#6a6a6a"/><rect x="586.95" y="13" width="1" height="4" fill="#6a6a6a"/><rect x="593.62" y="13" width="1" height="4" fill="#6a6a6a"/><rect x="600.29" y="0" width="1" height="17" fill="#6a6a6a"/><rect x="606.96" y="13" width="1" height="4" fill="#6a6a6a"/><rect x="613.63" y="13" width="1" height="4" fill="#6a6a6a"/><rect x="620.30" y="13" width="1" height="4" fill="#6a6a6a"/><rect x="626.97" y="13" width="1" height="4" fill="#6a6a6a"/><rect x="633.64" y="0" width="1" height="17" fill="#6a6a6a"/><rect x="640.31" y="13" width="1" height="4" fill="#6a6a6a"/><rect x="646.98" y="13" width="1" height="4" fill="#6a6a6a"/><rect x="653.65" y="13" width="1" height="4" fill="#6a6a6a"/><rect x="660.32" y="13" width="1" height="4" fill="#6a6a6a"/><rect x="666.99" y="0" width="1" height="17" fill="#6a6a6a"/><rect x="673.66" y="13" width="1" height="4" fill="#6a6a6a"/><rect x="680.33" y="13" width="1" height="4" fill="#6a6a6a"/></svg>
<div class="t" style="left:59.30px;top:84.38px;font-size:9.60px;line-height:9.60px;color:#cdcdcd;">0</div>
<div class="t" style="left:92.65px;top:84.38px;font-size:9.60px;line-height:9.60px;color:#cdcdcd;letter-spacing:-0.378px;">50</div>
<div class="t" style="left:126.00px;top:84.38px;font-size:9.60px;line-height:9.60px;color:#cdcdcd;letter-spacing:-0.284px;">100</div>
<div class="t" style="left:159.35px;top:84.38px;font-size:9.60px;line-height:9.60px;color:#cdcdcd;letter-spacing:-0.284px;">150</div>
<div class="t" style="left:192.70px;top:84.38px;font-size:9.60px;line-height:9.60px;color:#cdcdcd;letter-spacing:-0.284px;">200</div>
<div class="t" style="left:226.05px;top:84.38px;font-size:9.60px;line-height:9.60px;color:#cdcdcd;letter-spacing:-0.284px;">250</div>
<div class="t" style="left:259.40px;top:84.38px;font-size:9.60px;line-height:9.60px;color:#cdcdcd;letter-spacing:-0.284px;">300</div>
<div class="t" style="left:292.75px;top:84.38px;font-size:9.60px;line-height:9.60px;color:#cdcdcd;letter-spacing:-0.284px;">350</div>
<div class="t" style="left:326.10px;top:84.38px;font-size:9.60px;line-height:9.60px;color:#cdcdcd;letter-spacing:-0.284px;">400</div>
<div class="t" style="left:359.45px;top:84.38px;font-size:9.60px;line-height:9.60px;color:#cdcdcd;letter-spacing:-0.284px;">450</div>
<div class="t" style="left:392.80px;top:84.38px;font-size:9.60px;line-height:9.60px;color:#cdcdcd;letter-spacing:-0.284px;">500</div>
<div class="t" style="left:426.15px;top:84.38px;font-size:9.60px;line-height:9.60px;color:#cdcdcd;letter-spacing:-0.284px;">550</div>
<div class="t" style="left:459.50px;top:84.38px;font-size:9.60px;line-height:9.60px;color:#cdcdcd;letter-spacing:-0.284px;">600</div>
<div class="t" style="left:492.84px;top:84.38px;font-size:9.60px;line-height:9.60px;color:#cdcdcd;letter-spacing:-0.284px;">650</div>
<div class="t" style="left:526.19px;top:84.38px;font-size:9.60px;line-height:9.60px;color:#cdcdcd;letter-spacing:-0.284px;">700</div>
<div class="t" style="left:559.54px;top:84.38px;font-size:9.60px;line-height:9.60px;color:#cdcdcd;letter-spacing:-0.284px;">750</div>
<div class="t" style="left:592.89px;top:84.38px;font-size:9.60px;line-height:9.60px;color:#cdcdcd;letter-spacing:-0.284px;">800</div>
<div class="t" style="left:626.24px;top:84.38px;font-size:9.60px;line-height:9.60px;color:#cdcdcd;letter-spacing:-0.284px;">850</div>
<div class="t" style="left:659.59px;top:84.38px;font-size:9.60px;line-height:9.60px;color:#cdcdcd;letter-spacing:-0.284px;">900</div>
<div class="t" style="left:692.94px;top:84.38px;font-size:9.60px;line-height:9.60px;color:#cdcdcd;letter-spacing:-0.284px;">950</div>
<div class="t" style="left:726.29px;top:84.38px;font-size:9.60px;line-height:9.60px;color:#cdcdcd;letter-spacing:0.787px;">10(</div>
<div class="a" style="left:738px;top:83px;width:16px;height:17px;background:#3a3a3a;"></div>
<svg class="a" style="left:38px;top:100px;overflow:hidden" width="17" height="467" viewBox="0 0 17 467"><rect x="0" y="0.00" width="17" height="1" fill="#6a6a6a"/><rect x="13" y="6.67" width="4" height="1" fill="#6a6a6a"/><rect x="13" y="13.34" width="4" height="1" fill="#6a6a6a"/><rect x="13" y="20.01" width="4" height="1" fill="#6a6a6a"/><rect x="13" y="26.68" width="4" height="1" fill="#6a6a6a"/><rect x="0" y="33.35" width="17" height="1" fill="#6a6a6a"/><rect x="13" y="40.02" width="4" height="1" fill="#6a6a6a"/><rect x="13" y="46.69" width="4" height="1" fill="#6a6a6a"/><rect x="13" y="53.36" width="4" height="1" fill="#6a6a6a"/><rect x="13" y="60.03" width="4" height="1" fill="#6a6a6a"/><rect x="0" y="66.70" width="17" height="1" fill="#6a6a6a"/><rect x="13" y="73.37" width="4" height="1" fill="#6a6a6a"/><rect x="13" y="80.04" width="4" height="1" fill="#6a6a6a"/><rect x="13" y="86.71" width="4" height="1" fill="#6a6a6a"/><rect x="13" y="93.38" width="4" height="1" fill="#6a6a6a"/><rect x="0" y="100.05" width="17" height="1" fill="#6a6a6a"/><rect x="13" y="106.72" width="4" height="1" fill="#6a6a6a"/><rect x="13" y="113.39" width="4" height="1" fill="#6a6a6a"/><rect x="13" y="120.06" width="4" height="1" fill="#6a6a6a"/><rect x="13" y="126.73" width="4" height="1" fill="#6a6a6a"/><rect x="0" y="133.40" width="17" height="1" fill="#6a6a6a"/><rect x="13" y="140.07" width="4" height="1" fill="#6a6a6a"/><rect x="13" y="146.74" width="4" height="1" fill="#6a6a6a"/><rect x="13" y="153.41" width="4" height="1" fill="#6a6a6a"/><rect x="13" y="160.08" width="4" height="1" fill="#6a6a6a"/><rect x="0" y="166.75" width="17" height="1" fill="#6a6a6a"/><rect x="13" y="173.42" width="4" height="1" fill="#6a6a6a"/><rect x="13" y="180.09" width="4" height="1" fill="#6a6a6a"/><rect x="13" y="186.76" width="4" height="1" fill="#6a6a6a"/><rect x="13" y="193.43" width="4" height="1" fill="#6a6a6a"/><rect x="0" y="200.10" width="17" height="1" fill="#6a6a6a"/><rect x="13" y="206.77" width="4" height="1" fill="#6a6a6a"/><rect x="13" y="213.44" width="4" height="1" fill="#6a6a6a"/><rect x="13" y="220.11" width="4" height="1" fill="#6a6a6a"/><rect x="13" y="226.78" width="4" height="1" fill="#6a6a6a"/><rect x="0" y="233.45" width="17" height="1" fill="#6a6a6a"/><rect x="13" y="240.12" width="4" height="1" fill="#6a6a6a"/><rect x="13" y="246.79" width="4" height="1" fill="#6a6a6a"/><rect x="13" y="253.46" width="4" height="1" fill="#6a6a6a"/><rect x="13" y="260.13" width="4" height="1" fill="#6a6a6a"/><rect x="0" y="266.80" width="17" height="1" fill="#6a6a6a"/><rect x="13" y="273.47" width="4" height="1" fill="#6a6a6a"/><rect x="13" y="280.14" width="4" height="1" fill="#6a6a6a"/><rect x="13" y="286.81" width="4" height="1" fill="#6a6a6a"/><rect x="13" y="293.48" width="4" height="1" fill="#6a6a6a"/><rect x="0" y="300.15" width="17" height="1" fill="#6a6a6a"/><rect x="13" y="306.82" width="4" height="1" fill="#6a6a6a"/><rect x="13" y="313.49" width="4" height="1" fill="#6a6a6a"/><rect x="13" y="320.16" width="4" height="1" fill="#6a6a6a"/><rect x="13" y="326.83" width="4" height="1" fill="#6a6a6a"/><rect x="0" y="333.50" width="17" height="1" fill="#6a6a6a"/><rect x="13" y="340.17" width="4" height="1" fill="#6a6a6a"/><rect x="13" y="346.84" width="4" height="1" fill="#6a6a6a"/><rect x="13" y="353.51" width="4" height="1" fill="#6a6a6a"/><rect x="13" y="360.18" width="4" height="1" fill="#6a6a6a"/><rect x="0" y="366.85" width="17" height="1" fill="#6a6a6a"/><rect x="13" y="373.52" width="4" height="1" fill="#6a6a6a"/><rect x="13" y="380.19" width="4" height="1" fill="#6a6a6a"/><rect x="13" y="386.86" width="4" height="1" fill="#6a6a6a"/><rect x="13" y="393.53" width="4" height="1" fill="#6a6a6a"/><rect x="0" y="400.20" width="17" height="1" fill="#6a6a6a"/><rect x="13" y="406.87" width="4" height="1" fill="#6a6a6a"/><rect x="13" y="413.54" width="4" height="1" fill="#6a6a6a"/><rect x="13" y="420.21" width="4" height="1" fill="#6a6a6a"/><rect x="13" y="426.88" width="4" height="1" fill="#6a6a6a"/><rect x="0" y="433.54" width="17" height="1" fill="#6a6a6a"/><rect x="13" y="440.21" width="4" height="1" fill="#6a6a6a"/><rect x="13" y="446.88" width="4" height="1" fill="#6a6a6a"/><rect x="13" y="453.55" width="4" height="1" fill="#6a6a6a"/><rect x="13" y="460.22" width="4" height="1" fill="#6a6a6a"/><rect x="0" y="466.89" width="17" height="1" fill="#6a6a6a"/></svg>
<div class="t" style="left:42.50px;top:102.33px;font-size:10.20px;line-height:10.20px;color:#cdcdcd;">0</div>
<div class="t" style="left:42.50px;top:135.68px;font-size:10.20px;line-height:10.20px;color:#cdcdcd;">5</div>
<div class="t" style="left:42.50px;top:143.38px;font-size:10.20px;line-height:10.20px;color:#cdcdcd;">0</div>
<div class="t" style="left:42.50px;top:169.03px;font-size:10.20px;line-height:10.20px;color:#cdcdcd;">1</div>
<div class="t" style="left:42.50px;top:176.73px;font-size:10.20px;line-height:10.20px;color:#cdcdcd;">0</div>
<div class="t" style="left:42.50px;top:184.43px;font-size:10.20px;line-height:10.20px;color:#cdcdcd;">0</div>
<div class="t" style="left:42.50px;top:202.38px;font-size:10.20px;line-height:10.20px;color:#cdcdcd;">1</div>
<div class="t" style="left:42.50px;top:210.08px;font-size:10.20px;line-height:10.20px;color:#cdcdcd;">5</div>
<div class="t" style="left:42.50px;top:217.78px;font-size:10.20px;line-height:10.20px;color:#cdcdcd;">0</div>
<div class="t" style="left:42.50px;top:235.73px;font-size:10.20px;line-height:10.20px;color:#cdcdcd;">2</div>
<div class="t" style="left:42.50px;top:243.43px;font-size:10.20px;line-height:10.20px;color:#cdcdcd;">0</div>
<div class="t" style="left:42.50px;top:251.13px;font-size:10.20px;line-height:10.20px;color:#cdcdcd;">0</div>
<div class="t" style="left:42.50px;top:269.08px;font-size:10.20px;line-height:10.20px;color:#cdcdcd;">2</div>
<div class="t" style="left:42.50px;top:276.78px;font-size:10.20px;line-height:10.20px;color:#cdcdcd;">5</div>
<div class="t" style="left:42.50px;top:284.48px;font-size:10.20px;line-height:10.20px;color:#cdcdcd;">0</div>
<div class="t" style="left:42.50px;top:302.43px;font-size:10.20px;line-height:10.20px;color:#cdcdcd;">3</div>
<div class="t" style="left:42.50px;top:310.13px;font-size:10.20px;line-height:10.20px;color:#cdcdcd;">0</div>
<div class="t" style="left:42.50px;top:317.83px;font-size:10.20px;line-height:10.20px;color:#cdcdcd;">0</div>
<div class="t" style="left:42.50px;top:335.78px;font-size:10.20px;line-height:10.20px;color:#cdcdcd;">3</div>
<div class="t" style="left:42.50px;top:343.48px;font-size:10.20px;line-height:10.20px;color:#cdcdcd;">5</div>
<div class="t" style="left:42.50px;top:351.18px;font-size:10.20px;line-height:10.20px;color:#cdcdcd;">0</div>
<div class="t" style="left:42.50px;top:369.13px;font-size:10.20px;line-height:10.20px;color:#cdcdcd;">4</div>
<div class="t" style="left:42.50px;top:376.83px;font-size:10.20px;line-height:10.20px;color:#cdcdcd;">0</div>
<div class="t" style="left:42.50px;top:384.53px;font-size:10.20px;line-height:10.20px;color:#cdcdcd;">0</div>
<div class="t" style="left:42.50px;top:402.48px;font-size:10.20px;line-height:10.20px;color:#cdcdcd;">4</div>
<div class="t" style="left:42.50px;top:410.18px;font-size:10.20px;line-height:10.20px;color:#cdcdcd;">5</div>
<div class="t" style="left:42.50px;top:417.88px;font-size:10.20px;line-height:10.20px;color:#cdcdcd;">0</div>
<div class="t" style="left:42.50px;top:435.83px;font-size:10.20px;line-height:10.20px;color:#cdcdcd;">5</div>
<div class="t" style="left:42.50px;top:443.53px;font-size:10.20px;line-height:10.20px;color:#cdcdcd;">0</div>
<div class="t" style="left:42.50px;top:451.23px;font-size:10.20px;line-height:10.20px;color:#cdcdcd;">0</div>
<div class="t" style="left:42.50px;top:469.17px;font-size:10.20px;line-height:10.20px;color:#cdcdcd;">5</div>
<div class="t" style="left:42.50px;top:476.87px;font-size:10.20px;line-height:10.20px;color:#cdcdcd;">5</div>
<div class="t" style="left:42.50px;top:484.57px;font-size:10.20px;line-height:10.20px;color:#cdcdcd;">0</div>
<div class="t" style="left:42.50px;top:502.52px;font-size:10.20px;line-height:10.20px;color:#cdcdcd;">6</div>
<div class="t" style="left:42.50px;top:510.22px;font-size:10.20px;line-height:10.20px;color:#cdcdcd;">0</div>
<div class="t" style="left:42.50px;top:517.92px;font-size:10.20px;line-height:10.20px;color:#cdcdcd;">0</div>
<div class="t" style="left:42.50px;top:535.87px;font-size:10.20px;line-height:10.20px;color:#cdcdcd;">6</div>
<div class="t" style="left:42.50px;top:543.57px;font-size:10.20px;line-height:10.20px;color:#cdcdcd;">5</div>
<div class="t" style="left:42.50px;top:551.27px;font-size:10.20px;line-height:10.20px;color:#cdcdcd;">0</div>
<div class="a" style="left:738px;top:100px;width:16px;height:467px;background:linear-gradient(90deg,#2a2a2a 0,#2a2a2a 5px,#3a3a3a 5px,#444 16px);"></div>
<div class="a chk" style="left:55px;top:100px;width:683px;height:467px"></div>
<div class="a" style="left:38px;top:567px;width:716px;height:17px;background:#363636;"></div>
<div class="a" style="left:38px;top:567px;width:49px;height:17px;background:#2c2c2c;"></div>
<div class="a" style="left:87px;top:567px;width:24px;height:17px;background:#444444;"></div>
<div class="a" style="left:111px;top:567px;width:170px;height:17px;background:#474747;"></div>
<div class="a" style="left:281px;top:567px;width:13px;height:17px;background:#3c3c3c;border-left:1px solid #2c2c2c"></div>
<div class="t" style="left:43.00px;top:569.63px;font-size:10.50px;line-height:10.50px;color:#e6e6e6;letter-spacing:-0.522px;">66,67%</div>
<svg class="a" style="left:92px;top:569px;" width="14" height="13" viewBox="0 0 14 13"><circle cx="7" cy="6.5" r="6" fill="#5a5a5a"/><rect x="3" y="3.5" width="6" height="6" fill="#eee"/><path d="M8 6 L11 9" stroke="#eee" stroke-width="1.5"/></svg>
<div class="t" style="left:155.50px;top:570.33px;font-size:10.50px;line-height:10.50px;color:#e8e8e8;letter-spacing:-0.430px;">Doc: 2,05M/639,7K</div>
<svg class="a" style="left:284px;top:571px;" width="8" height="9" viewBox="0 0 8 9"><path d="M0 0 L8 4.5 L0 9 Z" fill="#f0f0f0"/></svg>
<div class="a" style="left:36px;top:584px;width:721px;height:3px;background:#4e4e4e;border-top:1px solid #2e2e2e"></div>
<svg class="a" style="left:0;top:0" width="1159" height="824" viewBox="0 0 1159 824"><clipPath id="cl"><rect x="55" y="100" width="683" height="467"/></clipPath><g clip-path="url(#cl)"><defs><linearGradient id="g1" gradientUnits="userSpaceOnUse" x1="0" y1="174" x2="0" y2="393"><stop offset="0" stop-color="#1fe228"/><stop offset="0.25" stop-color="#1ccd3e"/><stop offset="0.5" stop-color="#18b55a"/><stop offset="0.75" stop-color="#12967e"/><stop offset="1" stop-color="#1a6ca4"/></linearGradient></defs><path fill="url(#g1)" fill-rule="evenodd" d="M648.30 262.89 L648.45 264.77 L648.55 266.66 L648.58 268.55 L648.54 270.45 L648.45 272.35 L648.29 274.25 L648.07 276.16 L647.79 278.06 L647.45 279.97 L647.05 281.89 L646.58 283.80 L646.05 285.71 L645.46 287.62 L644.81 289.53 L644.09 291.43 L643.32 293.34 L642.49 295.24 L641.59 297.13 L640.63 299.03 L639.62 300.92 L638.54 302.80 L637.41 304.68 L636.22 306.55 L634.96 308.41 L633.65 310.27 L632.29 312.11 L630.86 313.95 L629.38 315.78 L627.84 317.60 L626.25 319.41 L624.60 321.21 L622.89 322.99 L621.13 324.77 L619.32 326.53 L617.45 328.27 L615.53 330.01 L613.56 331.73 L611.53 333.43 L609.46 335.12 L607.33 336.80 L605.16 338.46 L602.93 340.10 L600.66 341.72 L598.34 343.33 L595.97 344.91 L593.56 346.48 L591.10 348.03 L588.59 349.56 L586.05 351.07 L583.45 352.56 L580.82 354.02 L578.14 355.47 L575.43 356.89 L572.67 358.30 L569.87 359.67 L567.04 361.03 L564.17 362.36 L561.26 363.67 L558.31 364.95 L555.33 366.21 L552.32 367.44 L549.28 368.65 L546.20 369.83 L543.09 370.98 L539.95 372.11 L536.78 373.21 L533.58 374.28 L530.36 375.33 L527.11 376.35 L523.83 377.34 L520.53 378.30 L517.21 379.23 L513.86 380.13 L510.49 381.00 L507.10 381.84 L503.70 382.66 L500.27 383.44 L496.83 384.19 L493.37 384.91 L489.90 385.60 L486.41 386.26 L482.91 386.89 L479.39 387.48 L475.87 388.05 L472.34 388.58 L468.80 389.08 L465.25 389.55 L461.69 389.98 L458.13 390.38 L454.56 390.75 L451.00 391.09 L447.42 391.39 L443.85 391.67 L440.28 391.90 L436.71 392.11 L433.14 392.28 L429.57 392.42 L426.01 392.52 L422.46 392.60 L418.91 392.64 L415.37 392.64 L411.83 392.61 L408.31 392.55 L404.80 392.46 L401.30 392.33 L397.81 392.17 L394.34 391.97 L390.88 391.75 L387.44 391.49 L384.01 391.19 L380.61 390.87 L377.22 390.51 L373.85 390.11 L370.51 389.69 L367.18 389.23 L363.88 388.74 L360.61 388.22 L357.36 387.67 L354.13 387.08 L350.94 386.47 L347.77 385.82 L344.63 385.14 L341.52 384.43 L338.44 383.68 L335.40 382.91 L332.39 382.11 L329.41 381.28 L326.46 380.41 L323.56 379.52 L320.68 378.60 L317.85 377.65 L315.06 376.67 L312.30 375.66 L309.58 374.63 L306.91 373.56 L304.28 372.47 L301.69 371.35 L299.14 370.20 L296.63 369.03 L294.18 367.83 L291.76 366.61 L289.40 365.36 L287.08 364.09 L284.81 362.79 L282.58 361.46 L280.41 360.12 L278.29 358.74 L276.21 357.35 L274.19 355.93 L272.22 354.49 L270.30 353.03 L268.43 351.55 L266.62 350.05 L264.86 348.53 L263.16 346.98 L261.51 345.42 L259.92 343.84 L258.38 342.24 L256.90 340.62 L255.48 338.99 L254.11 337.34 L252.80 335.67 L251.55 333.98 L250.36 332.28 L249.23 330.57 L248.15 328.84 L247.14 327.09 L246.19 325.34 L245.29 323.57 L244.46 321.78 L243.69 319.99 L242.97 318.19 L242.32 316.37 L241.74 314.54 L241.21 312.71 L240.74 310.86 L240.34 309.01 L240.00 307.15 L239.72 305.28 L239.50 303.41 L239.35 301.53 L239.25 299.64 L239.22 297.75 L239.26 295.85 L239.35 293.95 L239.51 292.05 L239.73 290.14 L240.01 288.24 L240.35 286.33 L240.75 284.41 L241.22 282.50 L241.75 280.59 L242.34 278.68 L242.99 276.77 L243.71 274.87 L244.48 272.96 L245.31 271.06 L246.21 269.17 L247.17 267.27 L248.18 265.38 L249.26 263.50 L250.39 261.62 L251.58 259.75 L252.84 257.89 L254.15 256.03 L255.51 254.19 L256.94 252.35 L258.42 250.52 L259.96 248.70 L261.55 246.89 L263.20 245.09 L264.91 243.31 L266.67 241.53 L268.48 239.77 L270.35 238.03 L272.27 236.29 L274.24 234.57 L276.27 232.87 L278.34 231.18 L280.47 229.50 L282.64 227.84 L284.87 226.20 L287.14 224.58 L289.46 222.97 L291.83 221.39 L294.24 219.82 L296.70 218.27 L299.21 216.74 L301.75 215.23 L304.35 213.74 L306.98 212.28 L309.66 210.83 L312.37 209.41 L315.13 208.00 L317.93 206.63 L320.76 205.27 L323.63 203.94 L326.54 202.63 L329.49 201.35 L332.47 200.09 L335.48 198.86 L338.52 197.65 L341.60 196.47 L344.71 195.32 L347.85 194.19 L351.02 193.09 L354.22 192.02 L357.44 190.97 L360.69 189.95 L363.97 188.96 L367.27 188.00 L370.59 187.07 L373.94 186.17 L377.31 185.30 L380.70 184.46 L384.10 183.64 L387.53 182.86 L390.97 182.11 L394.43 181.39 L397.90 180.70 L401.39 180.04 L404.89 179.41 L408.41 178.82 L411.93 178.25 L415.46 177.72 L419.00 177.22 L422.55 176.75 L426.11 176.32 L429.67 175.92 L433.24 175.55 L436.80 175.21 L440.38 174.91 L443.95 174.63 L447.52 174.40 L451.09 174.19 L454.66 174.02 L458.23 173.88 L461.79 173.78 L465.34 173.70 L468.89 173.66 L472.43 173.66 L475.97 173.69 L479.49 173.75 L483.00 173.84 L486.50 173.97 L489.99 174.13 L493.46 174.33 L496.92 174.55 L500.36 174.81 L503.79 175.11 L507.19 175.43 L510.58 175.79 L513.95 176.19 L517.29 176.61 L520.62 177.07 L523.92 177.56 L527.19 178.08 L530.44 178.63 L533.67 179.22 L536.86 179.83 L540.03 180.48 L543.17 181.16 L546.28 181.87 L549.36 182.62 L552.40 183.39 L555.41 184.19 L558.39 185.02 L561.34 185.89 L564.24 186.78 L567.12 187.70 L569.95 188.65 L572.74 189.63 L575.50 190.64 L578.22 191.67 L580.89 192.74 L583.52 193.83 L586.11 194.95 L588.66 196.10 L591.17 197.27 L593.62 198.47 L596.04 199.69 L598.40 200.94 L600.72 202.21 L602.99 203.51 L605.22 204.84 L607.39 206.18 L609.51 207.56 L611.59 208.95 L613.61 210.37 L615.58 211.81 L617.50 213.27 L619.37 214.75 L621.18 216.25 L622.94 217.77 L624.64 219.32 L626.29 220.88 L627.88 222.46 L629.42 224.06 L630.90 225.68 L632.32 227.31 L633.69 228.96 L635.00 230.63 L636.25 232.32 L637.44 234.02 L638.57 235.73 L639.65 237.46 L640.66 239.21 L641.61 240.96 L642.51 242.73 L643.34 244.52 L644.11 246.31 L644.83 248.11 L645.48 249.93 L646.06 251.76 L646.59 253.59 L647.06 255.44 L647.46 257.29 L647.80 259.15 L648.08 261.02 Z M626.11 259.88 L626.21 261.38 L626.27 262.88 L626.27 264.38 L626.21 265.89 L626.11 267.40 L625.96 268.91 L625.76 270.42 L625.51 271.93 L625.21 273.45 L624.86 274.96 L624.46 276.47 L624.00 277.99 L623.50 279.50 L622.95 281.01 L622.35 282.52 L621.70 284.02 L621.01 285.52 L620.26 287.02 L619.46 288.52 L618.62 290.01 L617.73 291.49 L616.79 292.97 L615.80 294.45 L614.77 295.91 L613.69 297.38 L612.56 298.83 L611.38 300.27 L610.17 301.71 L608.90 303.14 L607.59 304.56 L606.23 305.97 L604.84 307.38 L603.39 308.77 L601.91 310.15 L600.38 311.52 L598.81 312.87 L597.19 314.22 L595.54 315.55 L593.84 316.88 L592.10 318.18 L590.33 319.48 L588.51 320.76 L586.65 322.02 L584.76 323.28 L582.83 324.51 L580.86 325.73 L578.86 326.94 L576.82 328.13 L574.74 329.30 L572.63 330.46 L570.48 331.59 L568.31 332.72 L566.10 333.82 L563.85 334.90 L561.58 335.97 L559.27 337.02 L556.94 338.04 L554.57 339.05 L552.18 340.04 L549.76 341.01 L547.31 341.95 L544.84 342.88 L542.34 343.79 L539.82 344.67 L537.27 345.53 L534.70 346.38 L532.10 347.19 L529.49 347.99 L526.85 348.77 L524.19 349.52 L521.52 350.24 L518.82 350.95 L516.11 351.63 L513.38 352.29 L510.64 352.92 L507.88 353.53 L505.10 354.12 L502.31 354.68 L499.51 355.21 L496.70 355.73 L493.88 356.21 L491.04 356.67 L488.20 357.11 L485.35 357.52 L482.49 357.91 L479.63 358.27 L476.76 358.60 L473.88 358.91 L471.00 359.19 L468.12 359.45 L465.24 359.68 L462.35 359.88 L459.46 360.06 L456.58 360.21 L453.69 360.33 L450.81 360.43 L447.93 360.51 L445.06 360.55 L442.19 360.57 L439.32 360.56 L436.46 360.53 L433.61 360.47 L430.77 360.39 L427.94 360.27 L425.11 360.13 L422.30 359.97 L419.50 359.78 L416.71 359.56 L413.94 359.32 L411.18 359.05 L408.43 358.75 L405.71 358.43 L402.99 358.08 L400.30 357.71 L397.62 357.31 L394.97 356.89 L392.33 356.44 L389.71 355.96 L387.12 355.46 L384.55 354.94 L382.00 354.39 L379.47 353.82 L376.97 353.22 L374.50 352.60 L372.05 351.95 L369.63 351.28 L367.24 350.59 L364.87 349.87 L362.54 349.13 L360.23 348.37 L357.96 347.58 L355.72 346.77 L353.51 345.94 L351.33 345.09 L349.18 344.21 L347.07 343.32 L345.00 342.40 L342.95 341.46 L340.95 340.51 L338.98 339.53 L337.05 338.53 L335.16 337.51 L333.30 336.47 L331.48 335.42 L329.71 334.34 L327.97 333.25 L326.27 332.13 L324.62 331.00 L323.00 329.86 L321.43 328.69 L319.90 327.51 L318.42 326.31 L316.97 325.10 L315.57 323.87 L314.22 322.63 L312.91 321.37 L311.64 320.09 L310.42 318.81 L309.25 317.51 L308.12 316.19 L307.04 314.86 L306.00 313.52 L305.02 312.17 L304.08 310.81 L303.18 309.43 L302.34 308.04 L301.55 306.65 L300.80 305.24 L300.10 303.83 L299.45 302.40 L298.85 300.97 L298.30 299.52 L297.80 298.07 L297.35 296.62 L296.94 295.15 L296.59 293.68 L296.29 292.20 L296.04 290.72 L295.84 289.23 L295.69 287.74 L295.59 286.24 L295.53 284.74 L295.53 283.24 L295.59 281.73 L295.69 280.22 L295.84 278.71 L296.04 277.20 L296.29 275.69 L296.59 274.17 L296.94 272.66 L297.34 271.15 L297.80 269.63 L298.30 268.12 L298.85 266.61 L299.45 265.10 L300.10 263.60 L300.79 262.10 L301.54 260.60 L302.34 259.10 L303.18 257.61 L304.07 256.13 L305.01 254.65 L306.00 253.17 L307.03 251.71 L308.11 250.24 L309.24 248.79 L310.42 247.35 L311.63 245.91 L312.90 244.48 L314.21 243.06 L315.57 241.65 L316.96 240.24 L318.41 238.85 L319.89 237.47 L321.42 236.10 L322.99 234.75 L324.61 233.40 L326.26 232.07 L327.96 230.74 L329.70 229.44 L331.47 228.14 L333.29 226.86 L335.15 225.60 L337.04 224.34 L338.97 223.11 L340.94 221.89 L342.94 220.68 L344.98 219.49 L347.06 218.32 L349.17 217.16 L351.32 216.03 L353.49 214.90 L355.70 213.80 L357.95 212.72 L360.22 211.65 L362.53 210.60 L364.86 209.58 L367.23 208.57 L369.62 207.58 L372.04 206.61 L374.49 205.67 L376.96 204.74 L379.46 203.83 L381.98 202.95 L384.53 202.09 L387.10 201.24 L389.70 200.43 L392.31 199.63 L394.95 198.85 L397.61 198.10 L400.28 197.38 L402.98 196.67 L405.69 195.99 L408.42 195.33 L411.16 194.70 L413.92 194.09 L416.70 193.50 L419.49 192.94 L422.29 192.41 L425.10 191.89 L427.92 191.41 L430.76 190.95 L433.60 190.51 L436.45 190.10 L439.31 189.71 L442.17 189.35 L445.04 189.02 L447.92 188.71 L450.80 188.43 L453.68 188.17 L456.56 187.94 L459.45 187.74 L462.34 187.56 L465.22 187.41 L468.11 187.29 L470.99 187.19 L473.87 187.11 L476.74 187.07 L479.61 187.05 L482.48 187.06 L485.34 187.09 L488.19 187.15 L491.03 187.23 L493.86 187.35 L496.69 187.49 L499.50 187.65 L502.30 187.84 L505.09 188.06 L507.86 188.30 L510.62 188.57 L513.37 188.87 L516.09 189.19 L518.81 189.54 L521.50 189.91 L524.18 190.31 L526.83 190.73 L529.47 191.18 L532.09 191.66 L534.68 192.16 L537.25 192.68 L539.80 193.23 L542.33 193.80 L544.83 194.40 L547.30 195.02 L549.75 195.67 L552.17 196.34 L554.56 197.03 L556.93 197.75 L559.26 198.49 L561.57 199.25 L563.84 200.04 L566.08 200.85 L568.29 201.68 L570.47 202.53 L572.62 203.41 L574.73 204.30 L576.80 205.22 L578.85 206.16 L580.85 207.11 L582.82 208.09 L584.75 209.09 L586.64 210.11 L588.50 211.15 L590.32 212.20 L592.09 213.28 L593.83 214.37 L595.53 215.49 L597.18 216.62 L598.80 217.76 L600.37 218.93 L601.90 220.11 L603.38 221.31 L604.83 222.52 L606.23 223.75 L607.58 224.99 L608.89 226.25 L610.16 227.53 L611.38 228.81 L612.55 230.11 L613.68 231.43 L614.76 232.76 L615.80 234.10 L616.78 235.45 L617.72 236.81 L618.62 238.19 L619.46 239.58 L620.25 240.97 L621.00 242.38 L621.70 243.79 L622.35 245.22 L622.95 246.65 L623.50 248.10 L624.00 249.55 L624.45 251.00 L624.86 252.47 L625.21 253.94 L625.51 255.42 L625.76 256.90 L625.96 258.39 Z"/><path d="M238.5 174.5 L593.5 174.5 L689.0 311.0 L238.5 495.5 Z" fill="none" stroke="#303030" stroke-width="0.85"/><rect x="235.5" y="171.5" width="6" height="6" fill="#fff" stroke="#222" stroke-width="1"/><rect x="413.5" y="171.5" width="6" height="6" fill="#fff" stroke="#222" stroke-width="1"/><rect x="590.5" y="171.5" width="6" height="6" fill="#fff" stroke="#222" stroke-width="1"/><rect x="638.5" y="239.5" width="6" height="6" fill="#fff" stroke="#222" stroke-width="1"/><rect x="460.5" y="400.5" width="6" height="6" fill="#fff" stroke="#222" stroke-width="1"/><rect x="235.5" y="492.5" width="6" height="6" fill="#fff" stroke="#222" stroke-width="1"/><rect x="235.5" y="332.5" width="6" height="6" fill="#fff" stroke="#222" stroke-width="1"/><circle cx="439.5" cy="289.5" r="3.2" fill="none" stroke="#222" stroke-width="1"/><path d="M433.0 289.5 h3 M443.0 289.5 h3 M439.5 283.0 v3 M439.5 293.0 v3" stroke="#222" stroke-width="1"/><rect x="439.0" y="289.0" width="1" height="1" fill="#222"/></g></svg>
<div class="a" style="left:1009px;top:60px;width:150px;height:764px;background:#535353;"></div>
<div class="a" style="left:1009px;top:60px;width:1px;height:764px;background:#2a2a2a;"></div>
<div class="a" style="left:1010px;top:60px;width:149px;height:12px;background:#393939;"></div>
<svg class="a" style="left:1036px;top:63px;" width="9" height="6" viewBox="0 0 9 6"><path d="M4 0 L0 3 L4 6 Z M9 0 L5 3 L9 6 Z" fill="#dcdcdc"/></svg>
<div class="a" style="left:1048px;top:72px;width:3px;height:752px;background:#2f2f2f;"></div>
<div class="a" style="left:1011px;top:72px;width:37px;height:40px;background:#535353;border-bottom:1px solid #353535"></div>
<svg class="a" style="left:1020px;top:76px;" width="20" height="3" viewBox="0 0 20 3"><rect x="0" y="0" width="1" height="3" fill="#2a2a2a"/><rect x="2" y="0" width="1" height="3" fill="#2a2a2a"/><rect x="4" y="0" width="1" height="3" fill="#2a2a2a"/><rect x="6" y="0" width="1" height="3" fill="#2a2a2a"/><rect x="8" y="0" width="1" height="3" fill="#2a2a2a"/><rect x="10" y="0" width="1" height="3" fill="#2a2a2a"/><rect x="12" y="0" width="1" height="3" fill="#2a2a2a"/><rect x="14" y="0" width="1" height="3" fill="#2a2a2a"/><rect x="16" y="0" width="1" height="3" fill="#2a2a2a"/><rect x="18" y="0" width="1" height="3" fill="#2a2a2a"/></svg>
<div class="a" style="left:1011px;top:113px;width:37px;height:40px;background:#535353;border-bottom:1px solid #353535"></div>
<svg class="a" style="left:1020px;top:117px;" width="20" height="3" viewBox="0 0 20 3"><rect x="0" y="0" width="1" height="3" fill="#2a2a2a"/><rect x="2" y="0" width="1" height="3" fill="#2a2a2a"/><rect x="4" y="0" width="1" height="3" fill="#2a2a2a"/><rect x="6" y="0" width="1" height="3" fill="#2a2a2a"/><rect x="8" y="0" width="1" height="3" fill="#2a2a2a"/><rect x="10" y="0" width="1" height="3" fill="#2a2a2a"/><rect x="12" y="0" width="1" height="3" fill="#2a2a2a"/><rect x="14" y="0" width="1" height="3" fill="#2a2a2a"/><rect x="16" y="0" width="1" height="3" fill="#2a2a2a"/><rect x="18" y="0" width="1" height="3" fill="#2a2a2a"/></svg>
<div class="a" style="left:1011px;top:154px;width:37px;height:40px;background:#535353;border-bottom:1px solid #353535"></div>
<svg class="a" style="left:1020px;top:158px;" width="20" height="3" viewBox="0 0 20 3"><rect x="0" y="0" width="1" height="3" fill="#2a2a2a"/><rect x="2" y="0" width="1" height="3" fill="#2a2a2a"/><rect x="4" y="0" width="1" height="3" fill="#2a2a2a"/><rect x="6" y="0" width="1" height="3" fill="#2a2a2a"/><rect x="8" y="0" width="1" height="3" fill="#2a2a2a"/><rect x="10" y="0" width="1" height="3" fill="#2a2a2a"/><rect x="12" y="0" width="1" height="3" fill="#2a2a2a"/><rect x="14" y="0" width="1" height="3" fill="#2a2a2a"/><rect x="16" y="0" width="1" height="3" fill="#2a2a2a"/><rect x="18" y="0" width="1" height="3" fill="#2a2a2a"/></svg>
<div class="a" style="left:1011px;top:195px;width:37px;height:40px;background:#535353;border-bottom:1px solid #353535"></div>
<svg class="a" style="left:1020px;top:199px;" width="20" height="3" viewBox="0 0 20 3"><rect x="0" y="0" width="1" height="3" fill="#2a2a2a"/><rect x="2" y="0" width="1" height="3" fill="#2a2a2a"/><rect x="4" y="0" width="1" height="3" fill="#2a2a2a"/><rect x="6" y="0" width="1" height="3" fill="#2a2a2a"/><rect x="8" y="0" width="1" height="3" fill="#2a2a2a"/><rect x="10" y="0" width="1" height="3" fill="#2a2a2a"/><rect x="12" y="0" width="1" height="3" fill="#2a2a2a"/><rect x="14" y="0" width="1" height="3" fill="#2a2a2a"/><rect x="16" y="0" width="1" height="3" fill="#2a2a2a"/><rect x="18" y="0" width="1" height="3" fill="#2a2a2a"/></svg>
<div class="a" style="left:1010px;top:72px;width:1px;height:752px;background:#3e3e3e;"></div>
<svg class="a" style="left:1023px;top:86px;" width="18" height="18" viewBox="0 0 18 18"><rect x="0.5" y="0.5" width="4" height="4" fill="none" stroke="#d0d0d0" stroke-width="1.2"/><rect x="0.5" y="6.5" width="4" height="4" fill="none" stroke="#d0d0d0" stroke-width="1.2"/><rect x="0" y="12" width="5" height="5" fill="#d0d0d0"/><path d="M8 16.5 Q14.5 13.5 13.5 7.5 Q13 4 10 3" fill="none" stroke="#d0d0d0" stroke-width="1.8"/><path d="M6.5 2.5 L11.5 -0.5 L11.5 6 Z" fill="#d0d0d0"/></svg>
<svg class="a" style="left:1021px;top:125px;" width="19" height="21" viewBox="0 0 19 21"><rect x="5" y="10" width="9" height="10" fill="#d0d0d0"/><path d="M6 10 L2 2 Q4 1 5.5 3 L8 10 Z M9 10 L9.5 0.5 Q11 0 11 2 L11 10 Z M12 10 L16 4 Q18 4.5 17.5 6 L13.5 10 Z" fill="#d0d0d0"/></svg>
<svg class="a" style="left:1021px;top:166px;" width="20" height="19" viewBox="0 0 20 19"><rect x="0" y="0" width="2" height="2" fill="#d0d0d0"/><rect x="3" y="0" width="5" height="2" fill="#d0d0d0"/><rect x="0" y="4" width="2" height="2" fill="#d0d0d0"/><rect x="3" y="4" width="5" height="2" fill="#d0d0d0"/><rect x="0" y="8" width="2" height="2" fill="#d0d0d0"/><rect x="3" y="8" width="3" height="2" fill="#d0d0d0"/><path d="M11 9 Q9.5 6.5 10.5 4.5 Q11.5 2.5 13 2.5 Q14.5 2.5 15.5 4.5 Q16.5 6.5 15 9 Z" fill="#d0d0d0"/><rect x="6" y="10" width="14" height="4" fill="#d0d0d0"/><rect x="6" y="15.5" width="14" height="2" fill="#d0d0d0"/></svg>
<svg class="a" style="left:1021px;top:207px;" width="20" height="18" viewBox="0 0 20 18"><path d="M2 17 L12 6" stroke="#d0d0d0" stroke-width="2.6" stroke-linecap="round"/><path d="M12 6 L17 1" stroke="#d0d0d0" stroke-width="1.2"/><path d="M3 2 Q1 4 3 6 Q5 7.5 7 6 L15 13 Q14 16 16.5 17 Q19 17.5 19.5 15 Q18 15.5 17 14.5 Q16.5 13 18 12.5 Q16 11 14 12 L7.5 5 Q8.5 2.5 6.5 1 Q5 0.2 3.5 0.8 L5.5 3 L4.5 4.5 Z" fill="#d0d0d0"/></svg>
<div class="a" style="left:1051px;top:72px;width:108px;height:133px;background:#535353;"></div>
<div class="a" style="left:1109px;top:72px;width:50px;height:18px;background:#414141;border-left:1px solid #333"></div>
<div class="t" style="left:1058.00px;top:76.66px;font-size:10.00px;line-height:10.00px;color:#f0f0f0;font-weight:bold;letter-spacing:-0.376px;">Swatches</div>
<div class="t" style="left:1116.50px;top:76.66px;font-size:10.00px;line-height:10.00px;color:#a9a9a9;font-weight:bold;letter-spacing:0.359px;">Navigator</div>
<div class="a" style="left:1051px;top:90px;width:108px;height:97px;background:#333333;"></div>
<svg class="a" style="left:1051px;top:90px;overflow:hidden" width="108" height="96" viewBox="0 0 108 96"><rect x="0" y="0" width="11" height="11" fill="#ff0000"/><rect x="12" y="0" width="11" height="11" fill="#ffff00"/><rect x="24" y="0" width="11" height="11" fill="#00ff00"/><rect x="36" y="0" width="11" height="11" fill="#00ffff"/><rect x="48" y="0" width="11" height="11" fill="#0000ff"/><rect x="60" y="0" width="11" height="11" fill="#ff00ff"/><rect x="72" y="0" width="11" height="11" fill="#ffffff"/><rect x="84" y="0" width="11" height="11" fill="#ebebeb"/><rect x="96" y="0" width="11" height="11" fill="#e0e0e0"/><rect x="0" y="12" width="11" height="11" fill="#ffdd00"/><rect x="12" y="12" width="11" height="11" fill="#11a05a"/><rect x="24" y="12" width="11" height="11" fill="#1ba3e8"/><rect x="36" y="12" width="11" height="11" fill="#2e3699"/><rect x="48" y="12" width="11" height="11" fill="#e6128c"/><rect x="60" y="12" width="11" height="11" fill="#999999"/><rect x="72" y="12" width="11" height="11" fill="#8a8a8a"/><rect x="84" y="12" width="11" height="11" fill="#7a7a7a"/><rect x="96" y="12" width="11" height="11" fill="#6a6a6a"/><rect x="0" y="24" width="11" height="11" fill="#f6c08c"/><rect x="12" y="24" width="11" height="11" fill="#fbf59b"/><rect x="24" y="24" width="11" height="11" fill="#cfe79b"/><rect x="36" y="24" width="11" height="11" fill="#a9d99b"/><rect x="48" y="24" width="11" height="11" fill="#98d5a8"/><rect x="60" y="24" width="11" height="11" fill="#8fd5c6"/><rect x="72" y="24" width="11" height="11" fill="#7ccdf1"/><rect x="84" y="24" width="11" height="11" fill="#89abe0"/><rect x="96" y="24" width="11" height="11" fill="#8f96d3"/><rect x="0" y="36" width="11" height="11" fill="#fff064"/><rect x="12" y="36" width="11" height="11" fill="#b1d66a"/><rect x="24" y="36" width="11" height="11" fill="#86c86a"/><rect x="36" y="36" width="11" height="11" fill="#4dbe74"/><rect x="48" y="36" width="11" height="11" fill="#34bcac"/><rect x="60" y="36" width="11" height="11" fill="#12baee"/><rect x="72" y="36" width="11" height="11" fill="#4a96dc"/><rect x="84" y="36" width="11" height="11" fill="#5682cc"/><rect x="96" y="36" width="11" height="11" fill="#6a6cbc"/><rect x="0" y="48" width="11" height="11" fill="#95ca40"/><rect x="12" y="48" width="11" height="11" fill="#3ab94a"/><rect x="24" y="48" width="11" height="11" fill="#11a84c"/><rect x="36" y="48" width="11" height="11" fill="#13aa98"/><rect x="48" y="48" width="11" height="11" fill="#12a8ea"/><rect x="60" y="48" width="11" height="11" fill="#1f77c8"/><rect x="72" y="48" width="11" height="11" fill="#1f5bb3"/><rect x="84" y="48" width="11" height="11" fill="#3a3a9c"/><rect x="96" y="48" width="11" height="11" fill="#6f2d92"/><rect x="0" y="60" width="11" height="11" fill="#238a3a"/><rect x="12" y="60" width="11" height="11" fill="#138a3b"/><rect x="24" y="60" width="11" height="11" fill="#10836c"/><rect x="36" y="60" width="11" height="11" fill="#1a7cb0"/><rect x="48" y="60" width="11" height="11" fill="#155c98"/><rect x="60" y="60" width="11" height="11" fill="#1b3f8a"/><rect x="72" y="60" width="11" height="11" fill="#1b2c7a"/><rect x="84" y="60" width="11" height="11" fill="#3a1a72"/><rect x="96" y="60" width="11" height="11" fill="#63196e"/><rect x="0" y="72" width="11" height="11" fill="#0b5a2a"/><rect x="12" y="72" width="11" height="11" fill="#0a5e5c"/><rect x="24" y="72" width="11" height="11" fill="#11598e"/><rect x="36" y="72" width="11" height="11" fill="#0f3f74"/><rect x="48" y="72" width="11" height="11" fill="#0b2e66"/><rect x="60" y="72" width="11" height="11" fill="#0a1062"/><rect x="72" y="72" width="11" height="11" fill="#2c0a5c"/><rect x="84" y="72" width="11" height="11" fill="#4a0a56"/><rect x="96" y="72" width="11" height="11" fill="#6a0a4e"/><rect x="0" y="84" width="11" height="11" fill="#a06830"/><rect x="12" y="84" width="11" height="11" fill="#935a22"/><rect x="24" y="84" width="11" height="11" fill="#7a4212"/></svg>
<div class="a" style="left:1087px;top:174px;width:72px;height:12px;background:#535353;"></div>
<div class="a" style="left:1051px;top:186px;width:108px;height:1px;background:#3c3c3c;"></div>
<div class="a" style="left:1051px;top:187px;width:108px;height:1px;background:#5e5e5e;"></div>
<div class="a" style="left:1051px;top:205px;width:108px;height:3px;background:#2f2f2f;"></div>
<div class="a" style="left:1051px;top:208px;width:108px;height:368px;background:#535353;"></div>
<div class="a" style="left:1126px;top:208px;width:33px;height:17px;background:#3e3e3e;border-left:1px solid #333;border-bottom:1px solid #333"></div>
<div class="t" style="left:1058.80px;top:211.66px;font-size:10.00px;line-height:10.00px;color:#f0f0f0;font-weight:bold;letter-spacing:-0.617px;">Brush Presets</div>
<div class="t" style="left:1057.40px;top:232.53px;font-size:10.50px;line-height:10.50px;color:#b4b4b4;letter-spacing:-0.936px;">Size:</div>
<svg class="a" style="left:1147px;top:232px;" width="14" height="13" viewBox="0 0 14 13"><path d="M2 6 Q6 1 12 4 L12 7 Q7 4 4 7.5 L6 8.5 L0.5 9.5 L1 5 Z" fill="#bdbdbd"/><rect x="0" y="11" width="14" height="1.5" fill="#bdbdbd"/></svg>
<div class="a" style="left:1057px;top:256px;width:110px;height:5px;background:#343434;border-radius:3px;border-bottom:1px solid #5e5e5e"></div>
<div class="a" style="left:1051px;top:271px;width:108px;height:1px;background:#353535;"></div>
<div class="a" style="left:1052px;top:272px;width:107px;height:304px;background:#4b4b4b;"></div>
<div class="a" style="left:1052px;top:272px;width:1px;height:304px;background:#3c3c3c;"></div>
<div class="a" style="left:1083px;top:272px;width:1px;height:304px;background:#474747;"></div>
<svg class="a" style="left:1052px;top:272px;overflow:hidden" width="107" height="304" viewBox="0 0 107 304"><defs><filter id="bs" x="-50%" y="-50%" width="200%" height="200%"><feGaussianBlur stdDeviation="3.6"/></filter><filter id="bs2" x="-30%" y="-100%" width="160%" height="300%"><feGaussianBlur stdDeviation="3.5"/></filter></defs><rect x="0" y="31" width="107" height="1" fill="#424242"/><rect x="0" y="63" width="107" height="1" fill="#424242"/><rect x="0" y="95" width="107" height="1" fill="#424242"/><rect x="0" y="127" width="107" height="1" fill="#424242"/><rect x="0" y="159" width="107" height="1" fill="#424242"/><rect x="0" y="191" width="107" height="1" fill="#424242"/><rect x="0" y="223" width="107" height="1" fill="#424242"/><rect x="0" y="255" width="107" height="1" fill="#424242"/><rect x="0" y="287" width="107" height="1" fill="#424242"/><rect x="0" y="319" width="107" height="1" fill="#424242"/><circle cx="15" cy="16" r="9" fill="#8e8e8e" filter="url(#bs)"/><path d="M40 16 Q75 7 112 11" fill="none" stroke="#8c8c8c" stroke-width="12" stroke-linecap="round" filter="url(#bs2)"/><circle cx="15" cy="48" r="13.5" fill="#8c8c8c"/><path d="M40 48 Q75 37 115 43" fill="none" stroke="#8c8c8c" stroke-width="17" stroke-linecap="round"/><circle cx="15" cy="80" r="9" fill="#8e8e8e" filter="url(#bs)"/><path d="M40 80 Q75 71 112 75" fill="none" stroke="#8c8c8c" stroke-width="12" stroke-linecap="round" filter="url(#bs2)"/><circle cx="15" cy="112" r="13.5" fill="#8c8c8c"/><path d="M40 112 Q75 101 115 107" fill="none" stroke="#8c8c8c" stroke-width="17" stroke-linecap="round"/><circle cx="15" cy="144" r="9" fill="#8e8e8e" filter="url(#bs)"/><path d="M40 144 Q75 135 112 139" fill="none" stroke="#8c8c8c" stroke-width="12" stroke-linecap="round" filter="url(#bs2)"/><circle cx="15" cy="176" r="13.5" fill="#8c8c8c"/><path d="M40 176 Q75 165 115 171" fill="none" stroke="#8c8c8c" stroke-width="17" stroke-linecap="round"/><rect x="8" y="205" width="1" height="5" fill="#8e8e8e"/><rect x="10" y="205" width="7" height="5" fill="#8a8a8a"/><rect x="17" y="206" width="3" height="3" fill="#7a7a7a"/><rect x="8" y="237" width="1" height="5" fill="#8e8e8e"/><rect x="10" y="237" width="7" height="5" fill="#8a8a8a"/><rect x="17" y="238" width="3" height="3" fill="#7a7a7a"/><rect x="8" y="269" width="1" height="5" fill="#8e8e8e"/><rect x="10" y="269" width="7" height="5" fill="#8a8a8a"/><rect x="17" y="270" width="3" height="3" fill="#7a7a7a"/><rect x="8" y="301" width="1" height="5" fill="#8e8e8e"/><rect x="10" y="301" width="7" height="5" fill="#8a8a8a"/><rect x="17" y="302" width="3" height="3" fill="#7a7a7a"/><path d="M40 208 Q70 196 110 198 L110 210 Q80 204 40 208 Z" fill="#8c8c8c"/><g fill="#8a8a8a" opacity="0.85"><path d="M62 237 Q85 226 110 228 L110 231 Q85 230 62 237 Z"/><path d="M55 243 Q85 232 110 235 L110 238 Q85 236 55 243 Z"/><path d="M68 247 Q90 240 110 242 L110 246 Q90 244 68 247 Z"/><path d="M80 251 Q95 247 110 249 L110 252 Q95 251 80 251 Z"/></g><path d="M34 274 Q70 259 110 262 L110 270 Q75 268 34 276 Z M44 283 Q80 269 110 272 L110 280 Q80 278 44 285 Z" fill="#8c8c8c"/><path d="M50 304 Q75 292 110 294 L110 306 L50 306 Z" fill="#8a8a8a"/></svg>
<div class="a" style="left:1051px;top:575px;width:108px;height:1px;background:#323232;"></div>
<div class="a" style="left:1051px;top:576px;width:108px;height:21px;background:#535353;border-top:1px solid #626262"></div>
<svg class="a" style="left:1139px;top:581px;" width="20" height="12" viewBox="0 0 20 12"><path d="M1 6 Q6 0.5 11 6 Q6 11.5 1 6 Z" fill="none" stroke="#c0c0c0" stroke-width="1.2"/><circle cx="6" cy="6" r="1.8" fill="#c0c0c0"/><path d="M9 11 L19 1" stroke="#c0c0c0" stroke-width="2"/></svg>
<div class="a" style="left:1051px;top:597px;width:108px;height:3px;background:#2f2f2f;"></div>
<div class="a" style="left:1051px;top:600px;width:108px;height:224px;background:#535353;"></div>
<div class="a" style="left:1094px;top:600px;width:53px;height:16px;background:#424242;border-left:1px solid #333"></div>
<div class="a" style="left:1147px;top:600px;width:12px;height:16px;background:#3d3d3d;border-left:1px solid #333"></div>
<div class="t" style="left:1058.40px;top:603.53px;font-size:10.50px;line-height:10.50px;color:#f2f2f2;letter-spacing:-0.703px;">Layers</div>
<div class="t" style="left:1101.00px;top:603.53px;font-size:10.50px;line-height:10.50px;color:#b0b0b0;letter-spacing:-0.409px;">Channels</div>
<div class="a" style="left:1051px;top:616px;width:108px;height:1px;background:#5e5e5e;"></div>
<div class="a" style="left:1055.5px;top:622px;width:69px;height:19px;background:linear-gradient(#5c5c5c,#545454);border:1px solid #3e3e3e;border-radius:2px"></div>
<svg class="a" style="left:1062px;top:626px;" width="10" height="10" viewBox="0 0 10 10"><circle cx="6" cy="4" r="3.2" fill="none" stroke="#a8a8a8" stroke-width="1.2"/><path d="M3.6 6.4 L0.8 9.2" stroke="#a8a8a8" stroke-width="1.4"/></svg>
<div class="t" style="left:1077.70px;top:625.13px;font-size:10.50px;line-height:10.50px;color:#b8b8b8;letter-spacing:-0.839px;">Kind</div>
<svg class="a" style="left:1115px;top:626px;" width="6" height="10" viewBox="0 0 6 10"><path d="M0 4 L3 0.5 L6 4 Z M0 6 L3 9.5 L6 6 Z" fill="#b0b0b0"/></svg>
<svg class="a" style="left:1137px;top:625px;" width="13" height="11" viewBox="0 0 13 11"><rect x="0.5" y="0.5" width="12" height="10" fill="none" stroke="#a8a8a8" stroke-width="1"/><path d="M2.5 8.5 L5 5.5 L7 7.5 L8.5 6 L10.5 8.5 Z" fill="#a8a8a8"/><circle cx="9" cy="3.5" r="1" fill="#a8a8a8"/></svg>
<div class="a" style="left:1051px;top:645px;width:108px;height:1px;background:#3c3c3c;"></div>
<div class="a" style="left:1051px;top:646px;width:108px;height:1px;background:#5e5e5e;"></div>
<div class="a" style="left:1055.5px;top:649.5px;width:110px;height:19px;background:linear-gradient(#6a6a6a,#5c5c5c);border:1px solid #363636;border-radius:2px"></div>
<div class="t" style="left:1063.00px;top:653.23px;font-size:10.50px;line-height:10.50px;color:#ececec;letter-spacing:-0.488px;">Normal</div>
<svg class="a" style="left:1152px;top:654px;" width="8" height="10" viewBox="0 0 8 10"><path d="M0 4 L4 0.5 L8 4 Z M0 6 L4 9.5 L8 6 Z" fill="#e0e0e0"/></svg>
<div class="a" style="left:1051px;top:672px;width:108px;height:1px;background:#3c3c3c;"></div>
<div class="a" style="left:1051px;top:673px;width:108px;height:1px;background:#5e5e5e;"></div>
<div class="t" style="left:1057.70px;top:682.53px;font-size:10.50px;line-height:10.50px;color:#bdbdbd;letter-spacing:-0.699px;">Lock:</div>
<svg class="a" style="left:1090px;top:682px;" width="11" height="11" viewBox="0 0 11 11"><rect x="0" y="0" width="5" height="5" fill="#9a9a9a"/><rect x="0" y="5" width="5" height="5" fill="#6e6e6e"/><rect x="5" y="0" width="5" height="5" fill="#6e6e6e"/><rect x="5" y="5" width="5" height="5" fill="#9a9a9a"/><rect x="0.5" y="0.5" width="10" height="10" fill="none" stroke="#8a8a8a" stroke-width="1"/></svg>
<svg class="a" style="left:1109px;top:680px;" width="17" height="14" viewBox="0 0 17 14"><path d="M16 0.5 L8 8.5" stroke="#9a9a9a" stroke-width="2"/><path d="M8.5 8 Q9 11 6 12.5 Q3 13.5 0.5 13 Q3.5 11.5 4 9.5 Q5.5 7.5 8.5 8 Z" fill="#9a9a9a"/></svg>
<svg class="a" style="left:1133px;top:680px;" width="14" height="14" viewBox="0 0 14 14"><path d="M7 0.5 V13.5 M0.5 7 H13.5" stroke="#9a9a9a" stroke-width="1.2"/><path d="M5 2.5 L7 0.5 L9 2.5 M5 11.5 L7 13.5 L9 11.5 M2.5 5 L0.5 7 L2.5 9 M11.5 5 L13.5 7 L11.5 9" fill="none" stroke="#9a9a9a" stroke-width="1.2"/></svg>
<div class="a" style="left:1153px;top:683px;width:6px;height:10px;background:#8a8a8a;"></div>
<div class="a" style="left:1051px;top:697px;width:108px;height:1px;background:#3c3c3c;"></div>
<div class="a" style="left:1051px;top:698px;width:108px;height:4px;background:#535353;"></div>
<div class="a" style="left:1051px;top:702px;width:108px;height:1px;background:#383838;"></div>
<div class="a" style="left:1081.5px;top:703px;width:77.5px;height:30px;background:#5b6a80;"></div>
<div class="a" style="left:1051px;top:703px;width:30.5px;height:30px;background:#535353;"></div>
<svg class="a" style="left:1059.5px;top:712.5px;" width="13" height="9" viewBox="0 0 13 9"><path d="M0.6 4.5 Q6.5 -1.8 12.4 4.5 Q6.5 10.8 0.6 4.5 Z" fill="#c2c2c2"/><circle cx="6.5" cy="4.6" r="2.9" fill="#3c3c3c"/><circle cx="7.3" cy="3.7" r="1" fill="#d8d8d8"/></svg>
<div class="a" style="left:1083px;top:704px;width:36px;height:27px;background:#f2f2f2;"></div>
<div class="a" style="left:1095px;top:704px;width:13px;height:27px;background:#5b6a80;"></div>
<div class="a" style="left:1083px;top:713px;width:36px;height:10px;background:#5b6a80;"></div>
<div class="a" style="left:1084.5px;top:705.5px;width:33px;height:24px;background:#111;"></div>
<div class="a chk" style="left:1086.5px;top:707.5px;width:29px;height:20px;background-size:8px 8px;background-position:0 0,4px 4px"></div>
<svg class="a" style="left:1086.5px;top:707.5px;" width="29" height="20" viewBox="0 0 29 20"><ellipse cx="16.5" cy="7.6" rx="8" ry="3.8" fill="none" stroke="#1c2aa6" stroke-width="1.6" stroke-dasharray="14 2 3 2"/><path d="M9.5 6 Q7.8 9.5 12 11 Q16 12.2 20 10.5 Q14 10.5 11.5 8.5 Q10 7 9.5 6 Z" fill="#1c2aa6"/></svg>
<div class="t" style="left:1127.40px;top:713.13px;font-size:10.50px;line-height:10.50px;color:#f6f6f6;letter-spacing:-0.337px;">Layer 1</div>
<div class="a" style="left:1081px;top:733px;width:1px;height:38px;background:#3e3e3e;"></div>
<svg class="a" style="left:1100.5px;top:737.5px;" width="13" height="9" viewBox="0 0 13 9"><path d="M0.6 4.5 Q6.5 -1.8 12.4 4.5 Q6.5 10.8 0.6 4.5 Z" fill="#c2c2c2"/><circle cx="6.5" cy="4.6" r="2.9" fill="#3c3c3c"/><circle cx="7.3" cy="3.7" r="1" fill="#d8d8d8"/></svg>
<div class="t" style="left:1120.30px;top:736.13px;font-size:10.50px;line-height:10.50px;color:#eeeeee;letter-spacing:0.016px;">Effects</div>
<svg class="a" style="left:1117.5px;top:755.5px;" width="13" height="9" viewBox="0 0 13 9"><path d="M0.6 4.5 Q6.5 -1.8 12.4 4.5 Q6.5 10.8 0.6 4.5 Z" fill="#c2c2c2"/><circle cx="6.5" cy="4.6" r="2.9" fill="#3c3c3c"/><circle cx="7.3" cy="3.7" r="1" fill="#d8d8d8"/></svg>
<div class="t" style="left:1137.20px;top:754.63px;font-size:10.50px;line-height:10.50px;color:#eeeeee;">Gradient Overlay</div>
<div class="a" style="left:1051px;top:770px;width:108px;height:1px;background:#383838;"></div>
<div class="a" style="left:1051px;top:771px;width:108px;height:1px;background:#5a5a5a;"></div>
<div class="a" style="left:1033px;top:796px;width:116px;height:19px;background:rgba(255,255,255,0.92);border-radius:10px;filter:blur(4px)"></div>
<div class="t" style="left:1039.6px;top:800.15px;font-size:13.6px;line-height:13.6px;letter-spacing:-0.04px"><span style="color:#f0925a">The</span><span style="color:#3f6db2">Difference</span><span style="color:#8e9aae">.ru</span></div>
<div class="a" style="left:570px;top:276px;width:293px;height:338px;background:#f0f0f0;border:1px solid #979797;box-shadow:2px 2px 3px rgba(0,0,0,.4)"></div>
<div class="a" style="left:571px;top:277px;width:291px;height:335px;background:transparent;border:1px solid #fafafa"></div>
<div class="a" style="left:599px;top:277px;width:1px;height:335px;background:#e2e2e2;"></div>
<div class="a" style="left:600px;top:277px;width:1px;height:335px;background:#ffffff;"></div>
<div class="a" style="left:601px;top:305px;width:259px;height:1px;background:#e2e2e2;"></div>
<div class="a" style="left:601px;top:306px;width:259px;height:1px;background:#ffffff;"></div>
<div class="a" style="left:601px;top:489px;width:259px;height:1px;background:#e2e2e2;"></div>
<div class="a" style="left:601px;top:490px;width:259px;height:1px;background:#ffffff;"></div>
<div class="a" style="left:601px;top:563px;width:259px;height:1px;background:#e2e2e2;"></div>
<div class="a" style="left:601px;top:564px;width:259px;height:1px;background:#ffffff;"></div>
<div class="a" style="left:573px;top:376px;width:287px;height:21px;background:linear-gradient(#f1f7fc,#dbe9f6);border:1px solid #bcdaf2;border-radius:3px"></div>
<div class="t" style="left:605.00px;top:284.26px;font-size:12.00px;line-height:12.00px;color:#111;letter-spacing:-0.109px;">Free Transform</div>
<div class="t" style="left:605.00px;top:314.26px;font-size:12.00px;line-height:12.00px;color:#111;letter-spacing:-0.455px;">Scale</div>
<div class="t" style="left:605.00px;top:336.26px;font-size:12.00px;line-height:12.00px;color:#111;letter-spacing:-0.031px;">Rotate</div>
<div class="t" style="left:605.00px;top:358.26px;font-size:12.00px;line-height:12.00px;color:#111;letter-spacing:-0.548px;">Skew</div>
<div class="t" style="left:605.00px;top:380.26px;font-size:12.00px;line-height:12.00px;color:#111;letter-spacing:0.222px;">Distort</div>
<div class="t" style="left:605.00px;top:402.26px;font-size:12.00px;line-height:12.00px;color:#111;letter-spacing:-0.170px;">Perspective</div>
<div class="t" style="left:605.00px;top:424.26px;font-size:12.00px;line-height:12.00px;color:#111;letter-spacing:0.158px;">Warp</div>
<div class="t" style="left:605.00px;top:446.26px;font-size:12.00px;line-height:12.00px;color:#8d8d8d;letter-spacing:-0.077px;">Content-Aware Scale</div>
<div class="t" style="left:605.00px;top:468.26px;font-size:12.00px;line-height:12.00px;color:#8d8d8d;letter-spacing:0.001px;">Puppet Warp</div>
<div class="t" style="left:605.00px;top:498.26px;font-size:12.00px;line-height:12.00px;color:#111;letter-spacing:-0.301px;">Rotate 180°</div>
<div class="t" style="left:605.00px;top:520.26px;font-size:12.00px;line-height:12.00px;color:#111;letter-spacing:-0.280px;">Rotate 90° CW</div>
<div class="t" style="left:605.00px;top:542.26px;font-size:12.00px;line-height:12.00px;color:#111;letter-spacing:-0.325px;">Rotate 90° CCW</div>
<div class="t" style="left:605.00px;top:572.26px;font-size:12.00px;line-height:12.00px;color:#111;letter-spacing:0.086px;">Flip Horizontal</div>
<div class="t" style="left:605.00px;top:594.26px;font-size:12.00px;line-height:12.00px;color:#111;letter-spacing:-0.019px;">Flip Vertical</div>
</body></html>
